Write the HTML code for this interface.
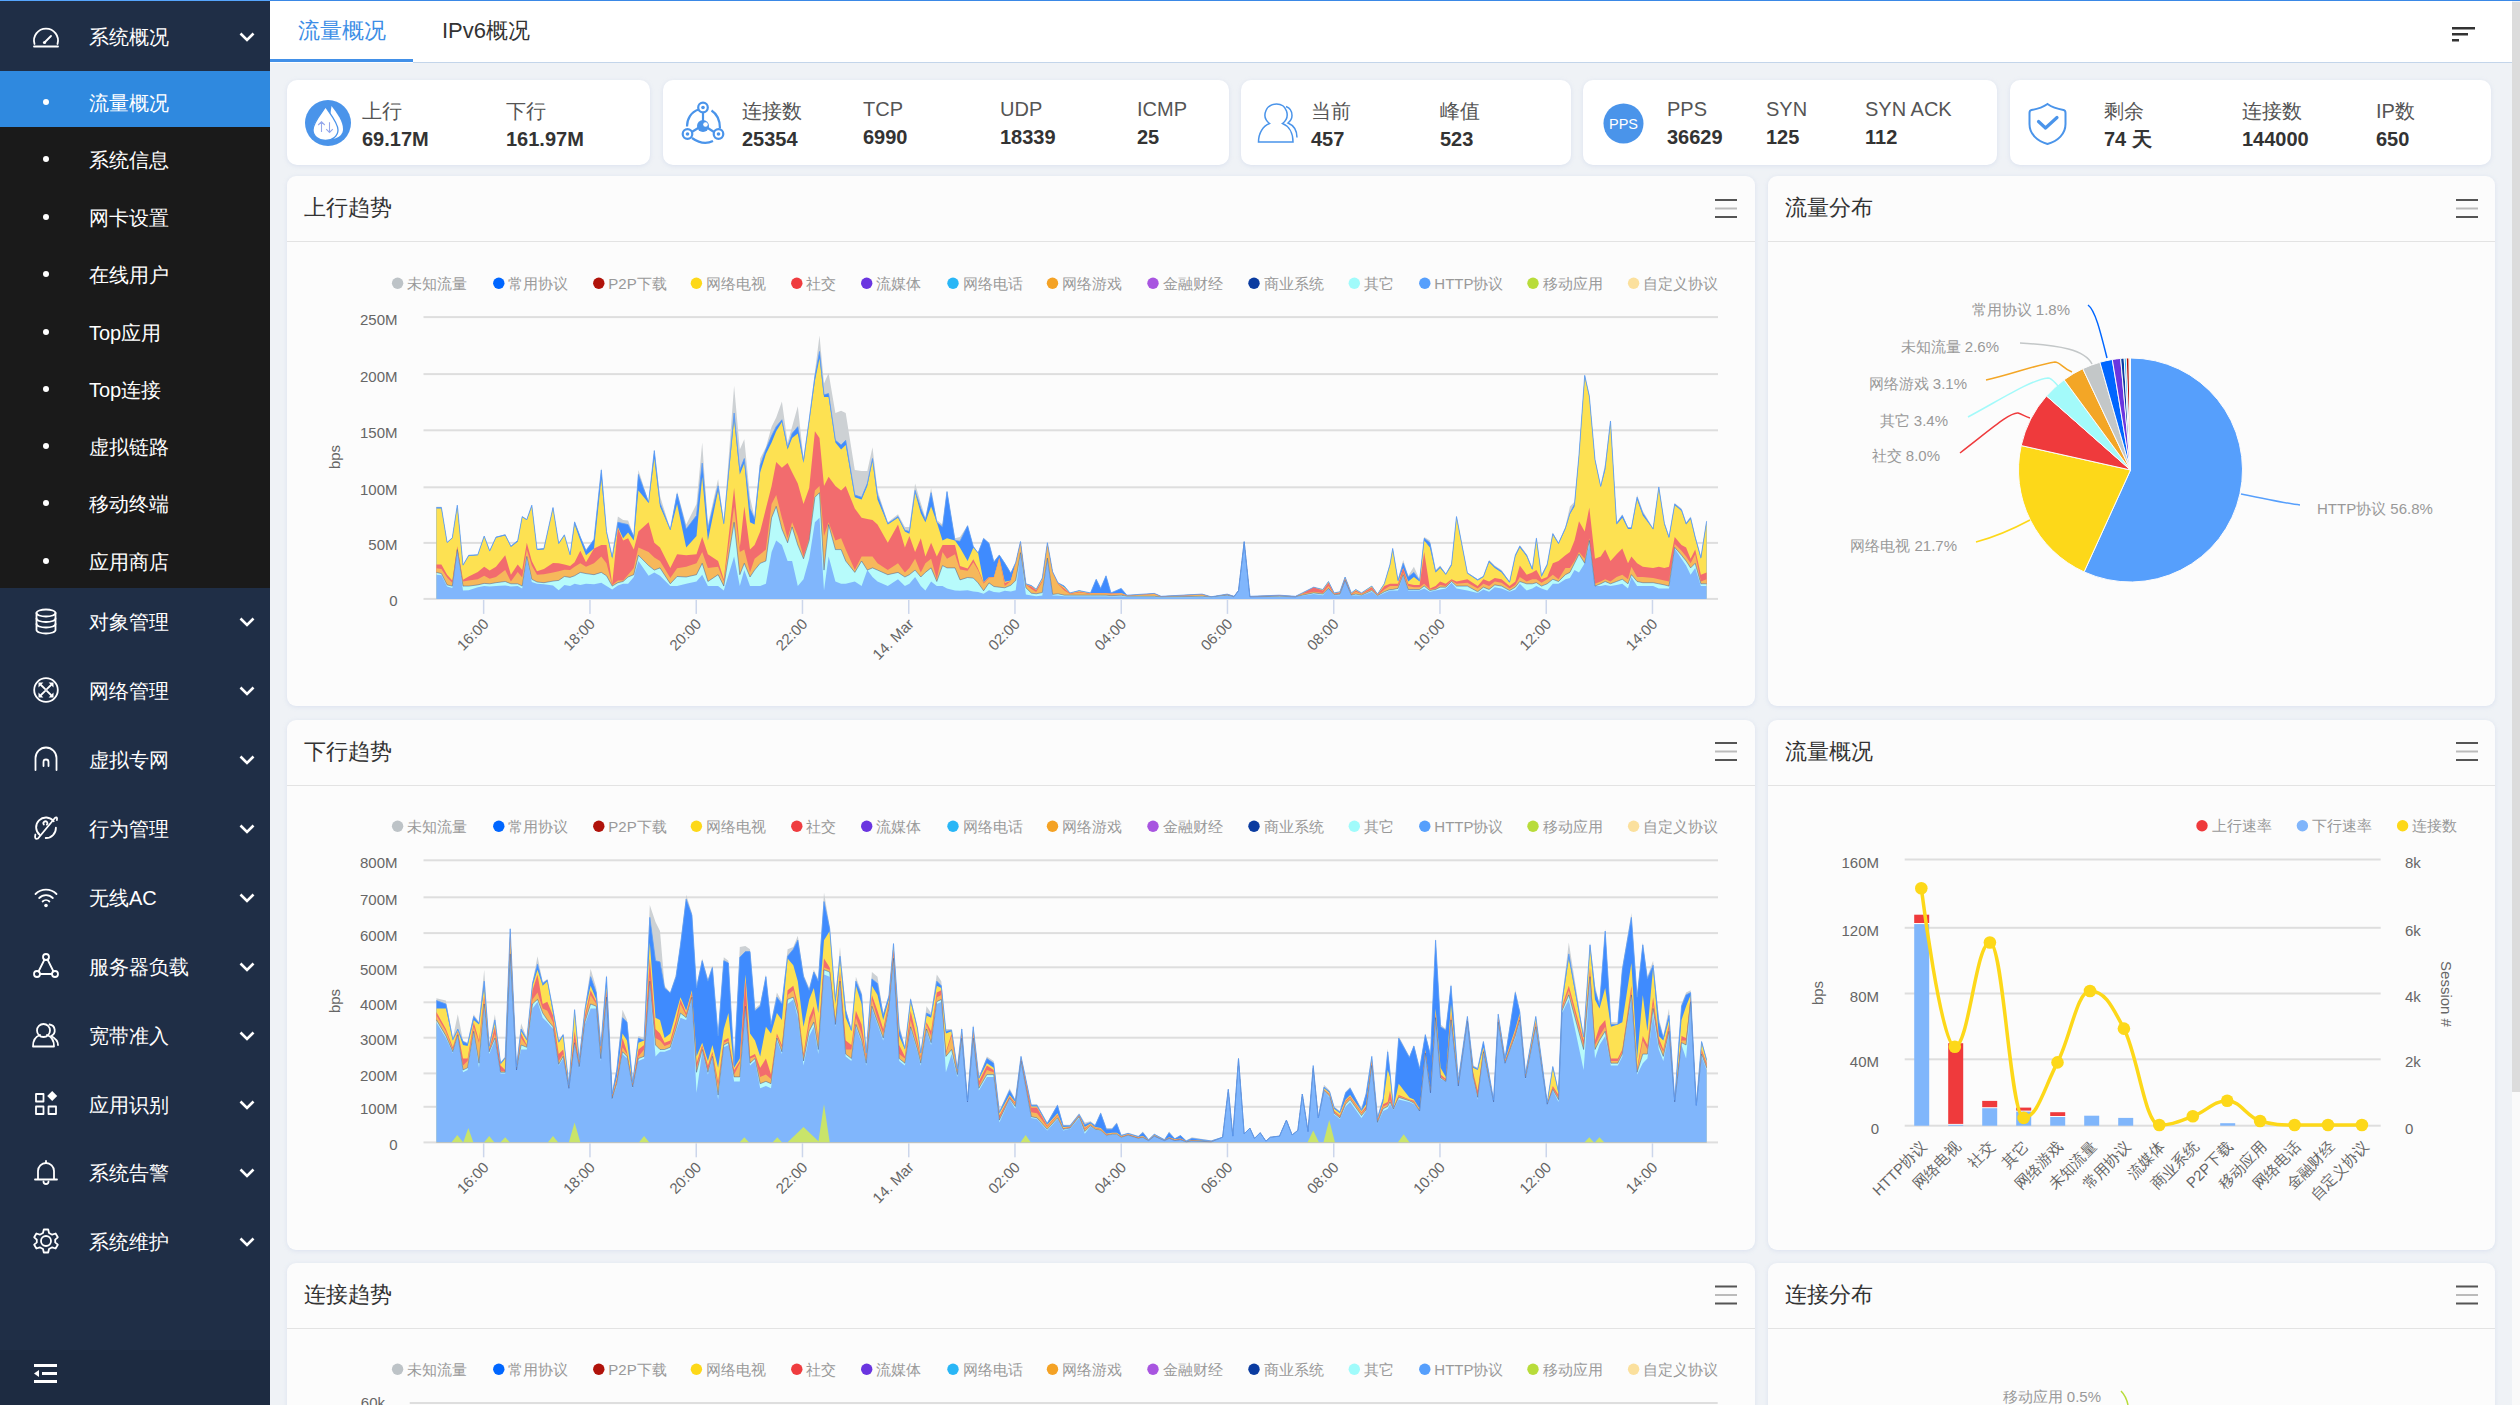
<!DOCTYPE html>
<html><head><meta charset="utf-8"><style>
*{margin:0;padding:0;box-sizing:border-box}
html,body{width:2520px;height:1405px;overflow:hidden;background:#eff2f6;font-family:'Liberation Sans', sans-serif}
.abs{position:absolute}
#sb{position:absolute;left:0;top:0;width:270px;height:1405px;background:#1f2e46;color:#fff}
.sb-item{position:absolute;left:0;width:270px}
#sb span,.st{position:absolute;left:89px;font-size:20px;line-height:20px;transform:translateY(-45%);white-space:nowrap;color:#fff}
.ic{position:absolute}
.chev{position:absolute;left:239px}
.dot{position:absolute;left:43px;width:6px;height:6px;border-radius:50%;background:#fff}
#tabs{position:absolute;left:270px;top:0;width:2242px;height:63px;background:#fff}
.tab{position:absolute;top:20px;font-size:22px;line-height:22px;white-space:nowrap}
.sc{position:absolute;top:80px;height:85px;background:#fff;border-radius:10px;box-shadow:0 1px 4px rgba(180,195,225,.35)}
.k{position:absolute;top:100px;font-size:20px;line-height:22px;color:#555;white-space:nowrap}
.kl{top:98px}
.kl+.v{top:126px}
.v{position:absolute;top:128px;font-size:20px;line-height:22px;font-weight:bold;color:#333;white-space:nowrap}
.cc{position:absolute;background:#fcfcfc;border-radius:9px;box-shadow:0 1px 4px rgba(180,195,225,.35)}
.ch{position:absolute;left:0;top:0;right:0;height:66px;border-bottom:1.5px solid #e3e3e3;font-size:22px;line-height:22px;color:#333;padding:21px 0 0 17px;white-space:nowrap}
svg text{font-family:'Liberation Sans', sans-serif}
.lg{font-size:15px;fill:#999}
.ax{font-size:15px;fill:#666}
.pl{font-size:15px;fill:#999}
</style></head><body>
<div style="position:absolute;left:270px;top:0;width:2250px;height:1px;background:#3a88e6;z-index:5"></div><div style="position:absolute;left:0;top:0;width:270px;height:1px;background:#55a5fd;z-index:5"></div>
<div id="tabs">
<div class="tab" style="left:28px;color:#3d8ee6">流量概况</div>
<div class="tab" style="left:172px;color:#333">IPv6概况</div>
<div style="position:absolute;left:0;top:59px;width:143px;height:3px;background:#4290e8"></div>
<div style="position:absolute;left:143px;top:62px;width:2099px;height:1px;background:#c3d5ea"></div>
<svg style="position:absolute;left:2182px;top:26px" width="24" height="17" viewBox="0 0 24 17"><rect x="0" y="1" width="23" height="2.5" fill="#333"/><rect x="0" y="7" width="16" height="2.5" fill="#333"/><rect x="0" y="13" width="7" height="2.5" fill="#333"/></svg>
</div>
<div style="position:absolute;left:2512px;top:2px;width:8px;height:1090px;background:#dcdcdc"></div>
<div style="position:absolute;left:2512px;top:1092px;width:8px;height:313px;background:#fafafa"></div>
<div class="sc" style="left:287px;width:363px"></div>
<div class="sc" style="left:663px;width:566px"></div>
<div class="sc" style="left:1241px;width:330px"></div>
<div class="sc" style="left:1583px;width:414px"></div>
<div class="sc" style="left:2010px;width:481px"></div>
<div class="k" style="left:362px">上行</div><div class="v" style="left:362px">69.17M</div>
<div class="k" style="left:506px">下行</div><div class="v" style="left:506px">161.97M</div>
<div class="k" style="left:742px">连接数</div><div class="v" style="left:742px">25354</div>
<div class="k kl" style="left:863px">TCP</div><div class="v" style="left:863px">6990</div>
<div class="k kl" style="left:1000px">UDP</div><div class="v" style="left:1000px">18339</div>
<div class="k kl" style="left:1137px">ICMP</div><div class="v" style="left:1137px">25</div>
<div class="k" style="left:1311px">当前</div><div class="v" style="left:1311px">457</div>
<div class="k" style="left:1440px">峰值</div><div class="v" style="left:1440px">523</div>
<div class="k kl" style="left:1667px">PPS</div><div class="v" style="left:1667px">36629</div>
<div class="k kl" style="left:1766px">SYN</div><div class="v" style="left:1766px">125</div>
<div class="k kl" style="left:1865px">SYN ACK</div><div class="v" style="left:1865px">112</div>
<div class="k" style="left:2104px">剩余</div><div class="v" style="left:2104px">74 天</div>
<div class="k" style="left:2242px">连接数</div><div class="v" style="left:2242px">144000</div>
<div class="k" style="left:2376px">IP数</div><div class="v" style="left:2376px">650</div>
<svg class="ic" style="left:305px;top:100px" width="46" height="46" viewBox="0 0 46 46"><circle cx="23" cy="23" r="23" fill="#4a94ea"/><path d="M26.5,6 C32,13 38,21.5 38,29 C38,33.5 35,37 30,38.5 L22,39 Z" fill="#fff"/><path d="M20.6,7 C15,15 8,23 8,30 C8,36 13.5,40.5 20.5,40.5 C27.5,40.5 33,36 33,30 C33,23 26,15 20.6,7 Z" fill="#fff" stroke="#4a94ea" stroke-width="1.3"/><path d="M16.5,32 V21.8 M13.2,25 L16.5,21.8 L19.8,25 M24.5,22.2 V32.5 M21.2,29.2 L24.5,32.5 L27.8,29.2" stroke="#95a8ec" stroke-width="1.1" fill="none"/></svg>
<svg class="ic" style="left:680px;top:100px" width="46" height="46" viewBox="0 0 46 46"><g stroke="#4a94ea" stroke-width="2.2" fill="none"><circle cx="23" cy="7.5" r="4.8"/><circle cx="7.5" cy="34" r="4.8"/><circle cx="38.5" cy="34" r="4.8"/><path d="M18.5,9.5 C11,12 7,19 7,26.5 M31.5,10.5 C37,14 40,20 40,28.5 M12,38 C19,43 27,44 33,41 M23,12.3 V21 M11.8,32 L19,27.5 M34,32 L27,27.5"/></g><circle cx="23" cy="26" r="6" fill="#4a94ea"/><circle cx="25.5" cy="24.5" r="2.3" fill="#fff"/><circle cx="23" cy="7.5" r="1.8" fill="#4a94ea"/><circle cx="7.5" cy="34" r="1.8" fill="#4a94ea"/><circle cx="38.5" cy="34" r="1.8" fill="#4a94ea"/></svg>
<svg class="ic" style="left:1257px;top:102px" width="44" height="44" viewBox="0 0 44 44"><g stroke="#4a94ea" stroke-width="1.5" fill="none"><path d="M1.5,40 C1.5,31 6,24 12.5,21.5 C8,18 7,13 9,8.5 C11,4 15,2 19.5,2 C24,2 28,4.5 29.5,9 C31,13.5 29.5,18.5 25.5,21.5 C32,24 36,31 36,40 Z"/><path d="M29,4.5 C33,6 35,9.5 35,13.5 C35,16.5 33.5,19 31,21 C37,23.5 40,29 40,35.5"/></g></svg>
<svg class="ic" style="left:1603px;top:103px" width="41" height="41" viewBox="0 0 41 41"><circle cx="20.5" cy="20.5" r="20" fill="#4a94ea"/><text x="20.5" y="26" text-anchor="middle" font-size="14.5" fill="#fff" font-family="Liberation Sans, sans-serif">PPS</text></svg>
<svg class="ic" style="left:2027px;top:102px" width="42" height="44" viewBox="0 0 42 44"><path d="M20.5,2 C17,4.5 13,6.5 4.5,8 C3,8.3 2.5,9.5 2.5,11 V22 C2.5,32 10,39 20.5,42 C31,39 38.5,32 38.5,22 V11 C38.5,9.5 38,8.3 36.5,8 C28,6.5 24,4.5 20.5,2 Z" stroke="#4a94ea" stroke-width="2" fill="none"/><path d="M11.5,19.5 L18.5,26 L30,15.5" stroke="#4a94ea" stroke-width="3.2" fill="none" stroke-linecap="round" stroke-linejoin="round"/></svg>
<div class="cc" style="left:287px;top:176px;width:1468px;height:530px"><div class="ch">上行趋势</div></div>
<div class="cc" style="left:1768px;top:176px;width:727px;height:530px"><div class="ch">流量分布</div></div>
<div class="cc" style="left:287px;top:720px;width:1468px;height:530px"><div class="ch">下行趋势</div></div>
<div class="cc" style="left:1768px;top:720px;width:727px;height:530px"><div class="ch">流量概况</div></div>
<div class="cc" style="left:287px;top:1263px;width:1468px;height:217px"><div class="ch">连接趋势</div></div>
<div class="cc" style="left:1768px;top:1263px;width:727px;height:217px"><div class="ch">连接分布</div></div>
<svg style="position:absolute;left:0;top:0" width="2520" height="1405" viewBox="0 0 2520 1405">
<circle cx="397.6" cy="283.3" r="5.7" fill="#bdc3c7"/>
<text x="407.1" y="288.8" class="lg">未知流量</text>
<circle cx="498.8" cy="283.3" r="5.7" fill="#0066ff"/>
<text x="508.3" y="288.8" class="lg">常用协议</text>
<circle cx="598.8" cy="283.3" r="5.7" fill="#b0120a"/>
<text x="608.3" y="288.8" class="lg">P2P下载</text>
<circle cx="696.4" cy="283.3" r="5.7" fill="#fdd819"/>
<text x="705.9" y="288.8" class="lg">网络电视</text>
<circle cx="796.8" cy="283.3" r="5.7" fill="#ef3c3f"/>
<text x="806.3" y="288.8" class="lg">社交</text>
<circle cx="866.7" cy="283.3" r="5.7" fill="#6a35e0"/>
<text x="876.2" y="288.8" class="lg">流媒体</text>
<circle cx="953.0" cy="283.3" r="5.7" fill="#29b6f6"/>
<text x="962.5" y="288.8" class="lg">网络电话</text>
<circle cx="1052.5" cy="283.3" r="5.7" fill="#f4a225"/>
<text x="1062.0" y="288.8" class="lg">网络游戏</text>
<circle cx="1153.0" cy="283.3" r="5.7" fill="#a855e0"/>
<text x="1162.5" y="288.8" class="lg">金融财经</text>
<circle cx="1254.0" cy="283.3" r="5.7" fill="#0a3ba0"/>
<text x="1263.5" y="288.8" class="lg">商业系统</text>
<circle cx="1354.3" cy="283.3" r="5.7" fill="#a0fbfb"/>
<text x="1363.8" y="288.8" class="lg">其它</text>
<circle cx="1424.8" cy="283.3" r="5.7" fill="#569ffc"/>
<text x="1434.3" y="288.8" class="lg">HTTP协议</text>
<circle cx="1533.0" cy="283.3" r="5.7" fill="#b8dc3a"/>
<text x="1542.5" y="288.8" class="lg">移动应用</text>
<circle cx="1633.6" cy="283.3" r="5.7" fill="#fbe09d"/>
<text x="1643.1" y="288.8" class="lg">自定义协议</text>
<rect x="423.5" y="316.1" width="1294.5" height="2" fill="#dedede"/>
<text x="397.5" y="324.6" class="ax" text-anchor="end">250M</text>
<rect x="423.5" y="373.1" width="1294.5" height="2" fill="#dedede"/>
<text x="397.5" y="381.6" class="ax" text-anchor="end">200M</text>
<rect x="423.5" y="429.3" width="1294.5" height="2" fill="#dedede"/>
<text x="397.5" y="437.8" class="ax" text-anchor="end">150M</text>
<rect x="423.5" y="486.3" width="1294.5" height="2" fill="#dedede"/>
<text x="397.5" y="494.8" class="ax" text-anchor="end">100M</text>
<rect x="423.5" y="541.9" width="1294.5" height="2" fill="#dedede"/>
<text x="397.5" y="550.4" class="ax" text-anchor="end">50M</text>
<rect x="423.5" y="597.9" width="1294.5" height="2" fill="#dedede"/>
<text x="397.5" y="606.4" class="ax" text-anchor="end">0</text>
<path d="M436.4,598.9 L436.4,506.8 L441.4,506.8 L447.1,542.4 L452.3,537.8 L457.3,505.2 L463.0,565.1 L468.7,555.3 L477.8,554.7 L484.2,536.0 L489.7,550.8 L496.0,537.1 L505.2,534.2 L510.9,546.2 L517.7,540.5 L522.2,516.6 L526.8,519.6 L531.8,505.2 L537.0,549.2 L543.9,548.5 L553.0,507.5 L558.7,543.3 L564.4,534.8 L570.1,554.7 L574.6,521.2 L580.3,536.4 L586.0,549.6 L594.0,538.7 L601.3,467.7 L606.5,531.4 L612.2,556.5 L617.9,516.6 L623.1,520.0 L628.1,520.5 L633.8,536.0 L638.4,469.9 L648.6,501.8 L654.3,449.4 L660.0,496.1 L670.3,529.1 L677.1,491.6 L686.2,524.6 L696.5,504.1 L702.2,442.6 L707.9,524.6 L718.1,479.0 L723.8,522.3 L734.1,385.7 L739.8,449.4 L744.3,439.2 L750.0,497.3 L754.6,517.8 L760.2,458.5 L765.9,447.2 L771.6,426.7 L776.2,417.5 L781.9,401.6 L787.6,442.6 L792.1,426.7 L797.8,406.2 L803.5,458.5 L809.2,417.5 L814.9,372.0 L819.5,335.6 L824.0,383.4 L828.6,373.1 L835.4,413.0 L841.1,410.7 L845.7,413.0 L854.8,469.9 L861.6,471.1 L867.3,471.1 L872.5,447.2 L877.5,490.4 L887.8,522.3 L898.0,514.3 L904.9,526.9 L909.4,526.9 L915.1,483.6 L920.8,503.0 L925.4,517.8 L931.1,488.1 L936.8,520.0 L942.5,524.6 L947.0,490.4 L955.0,538.3 L960.0,536.9 L967.6,525.4 L973.3,546.0 L978.1,552.7 L983.6,538.1 L989.0,543.0 L993.9,561.7 L999.3,554.5 L1004.8,563.0 L1010.8,572.6 L1015.7,562.3 L1020.5,541.2 L1025.9,583.5 L1031.4,585.3 L1036.2,589.0 L1042.3,577.5 L1047.4,542.4 L1052.6,571.4 L1058.0,582.3 L1064.3,586.1 L1070.0,592.9 L1079.1,590.6 L1090.5,592.9 L1096.2,579.3 L1100.7,588.4 L1106.0,575.8 L1111.0,592.9 L1121.2,588.4 L1126.9,595.2 L1154.3,593.4 L1161.1,596.3 L1202.1,594.1 L1211.2,596.8 L1227.2,594.1 L1234.0,596.3 L1238.5,590.6 L1244.2,541.7 L1249.9,596.3 L1279.5,595.2 L1295.5,596.3 L1302.3,592.9 L1313.7,587.2 L1322.8,589.5 L1328.5,581.5 L1334.2,592.9 L1339.9,591.8 L1345.1,577.0 L1351.3,592.9 L1355.8,589.5 L1361.5,592.9 L1371.8,586.1 L1377.5,594.1 L1384.3,583.8 L1390.0,563.3 L1392.7,547.4 L1398.0,579.3 L1403.2,559.9 L1408.2,575.8 L1413.9,566.7 L1419.6,579.3 L1424.2,537.1 L1429.9,540.5 L1435.6,570.1 L1440.1,565.6 L1445.8,573.6 L1451.5,563.3 L1456.5,515.5 L1467.4,572.4 L1477.7,579.3 L1483.4,575.8 L1489.1,559.9 L1494.8,565.6 L1501.6,570.1 L1509.6,581.5 L1515.3,554.2 L1519.8,545.1 L1526.7,554.2 L1532.3,567.9 L1536.4,537.1 L1541.5,574.7 L1547.2,563.3 L1552.8,532.6 L1558.5,542.8 L1565.4,526.9 L1569.9,506.4 L1574.5,501.8 L1579.0,454.0 L1584.7,374.3 L1589.3,394.8 L1595.0,458.5 L1600.7,485.9 L1605.2,463.1 L1610.5,419.8 L1616.6,522.3 L1622.3,514.3 L1628.0,526.9 L1631.4,526.9 L1637.1,495.0 L1642.8,510.9 L1653.1,528.0 L1658.8,485.9 L1664.4,522.3 L1669.0,536.0 L1674.7,503.0 L1681.5,508.6 L1686.1,522.3 L1690.6,516.6 L1695.2,536.0 L1700.9,556.5 L1706.6,520.0 L1706.6,598.9 Z" fill="#cdd1d4"/>
<path d="M436.4,598.9 L436.4,507.5 L441.4,507.5 L447.1,542.4 L452.3,537.8 L457.3,505.2 L463.0,565.1 L468.7,555.3 L477.8,554.7 L484.2,536.0 L489.7,550.8 L496.0,537.1 L505.2,534.8 L510.9,546.2 L517.7,540.5 L522.2,516.6 L526.8,519.6 L531.8,505.2 L537.0,549.2 L543.9,548.5 L553.0,507.5 L558.7,543.3 L564.4,534.8 L570.1,554.7 L574.6,521.9 L580.3,537.1 L586.0,550.8 L594.0,539.4 L601.3,469.9 L606.5,531.4 L612.2,556.9 L617.9,522.3 L623.1,523.5 L628.1,524.6 L633.8,536.4 L638.4,474.5 L648.6,502.3 L654.3,450.6 L660.0,503.0 L670.3,529.6 L677.1,493.8 L686.2,529.1 L696.5,515.5 L702.2,463.1 L707.9,529.1 L718.1,485.9 L723.8,523.5 L734.1,413.0 L739.8,469.9 L744.3,458.5 L750.0,508.6 L754.6,518.9 L760.2,465.4 L765.9,449.4 L771.6,435.8 L776.2,426.7 L781.9,419.8 L787.6,447.2 L792.1,433.5 L797.8,426.7 L803.5,460.8 L809.2,419.8 L814.9,376.5 L819.5,351.5 L824.0,394.8 L828.6,393.6 L835.4,440.3 L841.1,444.9 L845.7,440.3 L854.8,495.0 L861.6,497.3 L867.3,483.6 L872.5,458.5 L877.5,495.0 L887.8,523.5 L898.0,516.6 L904.9,530.3 L909.4,531.4 L915.1,490.4 L920.8,508.6 L925.4,520.0 L931.1,492.7 L936.8,522.3 L942.5,526.9 L947.0,491.6 L955.0,540.5 L960.0,541.2 L967.6,525.7 L973.3,546.6 L978.1,553.0 L983.6,538.5 L989.0,543.3 L993.9,562.0 L999.3,555.1 L1004.8,563.3 L1010.8,573.2 L1015.7,562.6 L1020.5,541.5 L1025.9,583.8 L1031.4,585.6 L1036.2,589.3 L1042.3,578.1 L1047.4,542.7 L1052.6,571.7 L1058.0,582.9 L1064.3,586.1 L1070.0,592.9 L1079.1,590.6 L1090.5,592.9 L1096.2,579.3 L1100.7,588.4 L1106.0,575.8 L1111.0,592.9 L1121.2,588.4 L1126.9,595.2 L1154.3,593.4 L1161.1,596.3 L1202.1,594.1 L1211.2,596.8 L1227.2,594.1 L1234.0,596.3 L1238.5,590.6 L1244.2,541.7 L1249.9,596.3 L1279.5,595.2 L1295.5,596.3 L1302.3,592.9 L1313.7,587.2 L1322.8,589.5 L1328.5,581.5 L1334.2,592.9 L1339.9,591.8 L1345.1,577.0 L1351.3,592.9 L1355.8,589.5 L1361.5,592.9 L1371.8,586.1 L1377.5,594.1 L1384.3,583.8 L1390.0,564.4 L1392.7,548.5 L1398.0,580.4 L1403.2,563.3 L1408.2,577.0 L1413.9,572.4 L1419.6,580.4 L1424.2,538.3 L1429.9,542.8 L1435.6,571.3 L1440.1,566.7 L1445.8,574.2 L1451.5,564.4 L1456.5,516.6 L1467.4,572.9 L1477.7,579.7 L1483.4,576.5 L1489.1,561.0 L1494.8,566.7 L1501.6,571.3 L1509.6,582.0 L1515.3,555.3 L1519.8,546.2 L1526.7,555.3 L1532.3,569.0 L1536.4,538.3 L1541.5,575.8 L1547.2,564.4 L1552.8,533.7 L1558.5,543.3 L1565.4,528.0 L1569.9,513.2 L1574.5,504.1 L1579.0,455.1 L1584.7,375.4 L1589.3,395.9 L1595.0,459.7 L1600.7,486.3 L1605.2,467.7 L1610.5,421.0 L1616.6,523.5 L1622.3,515.5 L1628.0,528.0 L1631.4,528.0 L1637.1,497.3 L1642.8,513.2 L1653.1,529.1 L1658.8,487.0 L1664.4,523.5 L1669.0,537.1 L1674.7,504.1 L1681.5,509.8 L1686.1,523.5 L1690.6,517.8 L1695.2,537.1 L1700.9,557.6 L1706.6,521.2 L1706.6,598.9 Z" fill="#3f8bfe"/>
<path d="M436.4,598.9 L436.4,508.6 L441.4,508.6 L447.1,542.8 L452.3,538.3 L457.3,506.4 L463.0,565.6 L468.7,556.0 L477.8,555.3 L484.2,536.4 L489.7,551.5 L496.0,537.8 L505.2,535.5 L510.9,546.9 L517.7,541.7 L522.2,517.3 L526.8,520.0 L531.8,506.4 L537.0,550.1 L543.9,549.6 L553.0,508.2 L558.7,544.0 L564.4,535.5 L570.1,555.3 L574.6,524.6 L580.3,540.5 L586.0,555.3 L594.0,548.5 L601.3,479.0 L606.5,532.6 L612.2,558.8 L617.9,526.9 L623.1,538.3 L628.1,532.6 L633.8,540.5 L638.4,490.4 L648.6,503.0 L654.3,458.5 L660.0,506.4 L670.3,530.3 L677.1,504.1 L686.2,547.4 L696.5,536.0 L702.2,476.8 L707.9,540.5 L718.1,490.4 L723.8,524.6 L734.1,419.8 L739.8,474.5 L744.3,463.1 L750.0,522.3 L754.6,524.6 L760.2,472.2 L765.9,454.0 L771.6,442.6 L776.2,431.2 L781.9,422.1 L787.6,449.4 L792.1,438.0 L797.8,433.5 L803.5,463.1 L809.2,422.1 L814.9,381.1 L819.5,358.3 L824.0,397.0 L828.6,397.0 L835.4,442.6 L841.1,449.4 L845.7,444.9 L854.8,497.3 L861.6,499.5 L867.3,485.9 L872.5,460.8 L877.5,499.5 L887.8,524.6 L898.0,517.8 L904.9,531.4 L909.4,533.7 L915.1,492.7 L920.8,513.2 L925.4,522.3 L931.1,506.4 L936.8,522.3 L942.5,540.5 L947.0,538.3 L955.0,540.5 L960.0,547.8 L967.6,561.1 L973.3,547.8 L978.1,553.0 L983.6,582.3 L989.0,576.9 L993.9,576.9 L999.3,557.5 L1004.8,581.7 L1010.8,580.5 L1015.7,563.0 L1020.5,541.8 L1025.9,584.1 L1031.4,585.9 L1036.2,589.6 L1042.3,578.4 L1047.4,543.0 L1052.6,572.0 L1058.0,583.2 L1064.3,587.2 L1070.0,592.9 L1079.1,591.1 L1090.5,592.9 L1096.2,592.9 L1100.7,592.9 L1106.0,592.9 L1111.0,593.4 L1121.2,592.9 L1126.9,595.2 L1154.3,593.4 L1161.1,596.3 L1202.1,594.1 L1211.2,596.8 L1227.2,594.1 L1234.0,596.3 L1238.5,590.6 L1244.2,541.7 L1249.9,596.3 L1279.5,595.2 L1295.5,596.3 L1302.3,592.9 L1313.7,587.2 L1322.8,589.5 L1328.5,581.5 L1334.2,592.9 L1339.9,591.8 L1345.1,577.0 L1351.3,592.9 L1355.8,589.5 L1361.5,592.9 L1371.8,586.1 L1377.5,594.1 L1384.3,583.8 L1390.0,565.6 L1392.7,549.6 L1398.0,581.5 L1403.2,567.9 L1408.2,581.5 L1413.9,577.0 L1419.6,581.5 L1424.2,540.5 L1429.9,547.4 L1435.6,572.4 L1440.1,567.9 L1445.8,574.7 L1451.5,565.6 L1456.5,517.8 L1467.4,573.6 L1477.7,580.4 L1483.4,577.0 L1489.1,562.2 L1494.8,567.9 L1501.6,572.4 L1509.6,582.7 L1515.3,556.5 L1519.8,547.4 L1526.7,556.5 L1532.3,570.1 L1536.4,539.4 L1541.5,577.0 L1547.2,565.6 L1552.8,534.8 L1558.5,544.0 L1565.4,529.1 L1569.9,514.3 L1574.5,506.4 L1579.0,456.3 L1584.7,376.5 L1589.3,397.0 L1595.0,460.8 L1600.7,487.0 L1605.2,469.9 L1610.5,422.1 L1616.6,524.6 L1622.3,517.8 L1628.0,529.1 L1631.4,529.1 L1637.1,499.5 L1642.8,515.5 L1653.1,529.1 L1658.8,488.1 L1664.4,524.6 L1669.0,538.3 L1674.7,505.2 L1681.5,510.9 L1686.1,524.6 L1690.6,518.9 L1695.2,538.3 L1700.9,558.8 L1706.6,522.3 L1706.6,598.9 Z" fill="#fde152"/>
<path d="M436.4,598.9 L436.4,564.4 L441.4,564.4 L447.1,574.7 L452.3,580.4 L457.3,546.2 L463.0,579.7 L468.7,576.5 L477.8,572.0 L484.2,566.7 L489.7,570.6 L496.0,566.7 L505.2,555.3 L510.9,574.7 L517.7,564.4 L522.2,570.1 L526.8,542.8 L531.8,561.0 L537.0,571.3 L543.9,569.0 L553.0,562.9 L558.7,563.3 L564.4,564.4 L570.1,566.0 L574.6,562.2 L580.3,550.8 L586.0,562.2 L594.0,548.5 L601.3,545.1 L606.5,545.1 L612.2,583.8 L617.9,528.0 L623.1,540.5 L628.1,538.3 L633.8,549.6 L638.4,531.4 L648.6,522.3 L654.3,542.8 L660.0,547.4 L670.3,567.9 L677.1,554.2 L686.2,555.3 L696.5,554.2 L702.2,537.1 L707.9,554.2 L718.1,561.0 L723.8,579.3 L734.1,488.1 L739.8,547.4 L744.3,506.4 L750.0,549.6 L754.6,545.1 L760.2,531.4 L765.9,508.6 L771.6,485.9 L776.2,462.0 L781.9,467.7 L787.6,463.1 L792.1,472.2 L797.8,483.6 L803.5,504.1 L809.2,488.1 L814.9,431.2 L819.5,438.0 L824.0,485.9 L828.6,476.8 L835.4,485.9 L841.1,490.4 L845.7,485.9 L854.8,508.6 L861.6,517.8 L867.3,518.9 L872.5,520.0 L877.5,524.6 L887.8,542.8 L898.0,524.6 L904.9,547.4 L909.4,536.0 L915.1,551.9 L920.8,538.3 L925.4,556.5 L931.1,542.8 L936.8,556.5 L942.5,545.1 L947.0,545.1 L955.0,545.1 L960.0,566.0 L967.6,568.4 L973.3,559.3 L978.1,568.4 L983.6,582.6 L989.0,577.2 L993.9,577.5 L999.3,557.8 L1004.8,582.9 L1010.8,580.8 L1015.7,563.3 L1020.5,542.1 L1025.9,584.4 L1031.4,586.5 L1036.2,590.2 L1042.3,580.5 L1047.4,543.3 L1052.6,572.3 L1058.0,583.5 L1064.3,588.4 L1070.0,593.4 L1079.1,591.8 L1090.5,593.4 L1096.2,593.4 L1100.7,593.4 L1106.0,593.4 L1111.0,593.6 L1121.2,593.4 L1126.9,595.4 L1154.3,593.6 L1161.1,596.3 L1202.1,594.3 L1211.2,596.8 L1227.2,594.3 L1234.0,596.3 L1238.5,590.6 L1244.2,541.7 L1249.9,596.3 L1279.5,595.2 L1295.5,596.3 L1302.3,593.4 L1313.7,587.2 L1322.8,590.6 L1328.5,582.7 L1334.2,593.4 L1339.9,592.5 L1345.1,578.1 L1351.3,594.1 L1355.8,590.6 L1361.5,593.4 L1371.8,587.2 L1377.5,594.7 L1384.3,586.1 L1390.0,583.8 L1392.7,583.8 L1398.0,583.8 L1403.2,567.9 L1408.2,583.8 L1413.9,584.9 L1419.6,584.9 L1424.2,551.9 L1429.9,588.4 L1435.6,586.1 L1440.1,581.5 L1445.8,583.8 L1451.5,579.3 L1456.5,581.5 L1467.4,579.3 L1477.7,586.1 L1483.4,579.3 L1489.1,581.5 L1494.8,578.1 L1501.6,579.3 L1509.6,586.1 L1515.3,581.5 L1519.8,565.6 L1526.7,574.7 L1532.3,572.4 L1536.4,570.1 L1541.5,579.3 L1547.2,577.0 L1552.8,563.3 L1558.5,561.0 L1565.4,555.3 L1569.9,551.9 L1574.5,540.5 L1579.0,521.2 L1584.7,531.4 L1589.3,507.5 L1595.0,558.8 L1600.7,556.5 L1605.2,549.6 L1610.5,561.0 L1616.6,554.2 L1622.3,548.5 L1628.0,563.3 L1631.4,556.5 L1637.1,563.3 L1642.8,566.7 L1653.1,567.9 L1658.8,566.7 L1664.4,567.9 L1669.0,566.7 L1674.7,537.1 L1681.5,545.1 L1686.1,547.4 L1690.6,558.8 L1695.2,549.6 L1700.9,574.7 L1706.6,572.4 L1706.6,598.9 Z" fill="#f26c6e"/>
<path d="M436.4,598.9 L436.4,568.3 L441.4,569.0 L447.1,577.4 L452.3,582.7 L457.3,548.5 L463.0,581.5 L468.7,580.4 L477.8,579.3 L484.2,575.8 L489.7,578.8 L496.0,577.0 L505.2,570.1 L510.9,581.5 L517.7,572.0 L522.2,577.4 L526.8,549.6 L531.8,565.6 L537.0,574.7 L543.9,574.2 L553.0,572.4 L558.7,571.3 L564.4,569.7 L570.1,570.1 L574.6,566.7 L580.3,563.3 L586.0,566.7 L594.0,563.3 L601.3,556.5 L606.5,563.3 L612.2,584.9 L617.9,580.4 L623.1,580.4 L628.1,574.7 L633.8,567.9 L638.4,547.4 L648.6,551.9 L654.3,557.6 L660.0,561.0 L670.3,578.1 L677.1,568.3 L686.2,566.7 L696.5,563.3 L702.2,551.9 L707.9,567.9 L718.1,566.7 L723.8,581.5 L734.1,506.4 L739.8,551.9 L744.3,549.6 L750.0,572.4 L754.6,558.8 L760.2,554.2 L765.9,549.6 L771.6,504.1 L776.2,495.0 L781.9,517.8 L787.6,538.3 L792.1,522.3 L797.8,536.0 L803.5,556.5 L809.2,538.3 L814.9,490.4 L819.5,485.9 L824.0,536.0 L828.6,522.3 L835.4,540.5 L841.1,538.3 L845.7,549.6 L854.8,570.1 L861.6,556.5 L867.3,556.5 L872.5,556.5 L877.5,563.3 L887.8,570.1 L898.0,563.3 L904.9,572.4 L909.4,567.9 L915.1,558.8 L920.8,572.4 L925.4,563.3 L931.1,558.8 L936.8,579.3 L942.5,551.9 L947.0,558.8 L955.0,554.2 L960.0,569.6 L967.6,570.8 L973.3,562.3 L978.1,570.2 L983.6,583.5 L989.0,578.1 L993.9,577.8 L999.3,558.7 L1004.8,585.9 L1010.8,581.1 L1015.7,563.6 L1020.5,542.4 L1025.9,584.7 L1031.4,589.0 L1036.2,592.0 L1042.3,581.7 L1047.4,543.6 L1052.6,572.6 L1058.0,584.1 L1064.3,590.6 L1070.0,594.1 L1079.1,592.5 L1090.5,594.1 L1096.2,594.1 L1100.7,594.1 L1106.0,594.1 L1111.0,594.3 L1121.2,594.1 L1126.9,595.7 L1154.3,594.1 L1161.1,596.6 L1202.1,594.7 L1211.2,596.8 L1227.2,594.5 L1234.0,596.6 L1238.5,590.6 L1244.2,541.7 L1249.9,596.6 L1279.5,595.7 L1295.5,596.6 L1302.3,594.1 L1313.7,591.8 L1322.8,592.9 L1328.5,586.1 L1334.2,594.1 L1339.9,593.4 L1345.1,579.3 L1351.3,594.7 L1355.8,591.8 L1361.5,594.1 L1371.8,589.5 L1377.5,595.2 L1384.3,589.5 L1390.0,586.1 L1392.7,586.1 L1398.0,586.1 L1403.2,572.4 L1408.2,586.1 L1413.9,587.2 L1419.6,587.2 L1424.2,583.8 L1429.9,589.5 L1435.6,588.4 L1440.1,584.9 L1445.8,586.1 L1451.5,580.4 L1456.5,583.8 L1467.4,582.7 L1477.7,588.4 L1483.4,583.8 L1489.1,586.1 L1494.8,581.5 L1501.6,582.7 L1509.6,588.4 L1515.3,584.9 L1519.8,577.0 L1526.7,581.5 L1532.3,579.3 L1536.4,579.3 L1541.5,582.7 L1547.2,579.3 L1552.8,574.7 L1558.5,579.3 L1565.4,567.9 L1569.9,567.9 L1574.5,561.0 L1579.0,551.9 L1584.7,558.8 L1589.3,538.3 L1595.0,583.8 L1600.7,581.5 L1605.2,579.3 L1610.5,581.5 L1616.6,577.0 L1622.3,574.7 L1628.0,579.3 L1631.4,566.7 L1637.1,577.0 L1642.8,577.0 L1653.1,578.1 L1658.8,579.3 L1664.4,580.4 L1669.0,581.5 L1674.7,544.0 L1681.5,550.8 L1686.1,556.5 L1690.6,563.3 L1695.2,554.2 L1700.9,581.5 L1706.6,579.3 L1706.6,598.9 Z" fill="#f6b85b"/>
<path d="M436.4,598.9 L436.4,572.4 L441.4,573.6 L447.1,584.9 L452.3,586.1 L457.3,549.6 L463.0,586.1 L468.7,586.1 L477.8,584.9 L484.2,583.4 L489.7,583.8 L496.0,582.7 L505.2,581.5 L510.9,583.8 L517.7,583.8 L522.2,586.1 L526.8,556.5 L531.8,579.3 L537.0,582.0 L543.9,582.7 L553.0,581.1 L558.7,580.4 L564.4,576.5 L570.1,577.4 L574.6,575.8 L580.3,572.4 L586.0,573.6 L594.0,574.7 L601.3,572.4 L606.5,575.8 L612.2,586.1 L617.9,582.7 L623.1,581.5 L628.1,577.0 L633.8,574.7 L638.4,555.3 L648.6,565.6 L654.3,570.1 L660.0,567.9 L670.3,583.8 L677.1,576.5 L686.2,577.0 L696.5,574.7 L702.2,563.3 L707.9,581.5 L718.1,574.7 L723.8,586.1 L734.1,522.3 L739.8,574.7 L744.3,563.3 L750.0,577.0 L754.6,570.1 L760.2,563.3 L765.9,561.0 L771.6,517.8 L776.2,506.4 L781.9,529.1 L787.6,542.8 L792.1,526.9 L797.8,545.1 L803.5,558.8 L809.2,540.5 L814.9,497.3 L819.5,492.7 L824.0,570.1 L828.6,524.6 L835.4,549.6 L841.1,549.6 L845.7,561.0 L854.8,572.4 L861.6,561.0 L867.3,570.1 L872.5,567.9 L877.5,570.1 L887.8,574.7 L898.0,572.4 L904.9,577.0 L909.4,574.7 L915.1,570.1 L920.8,577.0 L925.4,572.4 L931.1,567.9 L936.8,581.5 L942.5,565.6 L947.0,567.9 L955.0,567.9 L960.0,579.9 L967.6,577.5 L973.3,578.1 L978.1,582.9 L983.6,590.8 L989.0,582.9 L993.9,586.5 L999.3,587.2 L1004.8,587.8 L1010.8,585.3 L1015.7,580.5 L1020.5,552.7 L1025.9,587.8 L1031.4,593.2 L1036.2,593.8 L1042.3,592.6 L1047.4,558.1 L1052.6,594.4 L1058.0,593.8 L1064.3,595.2 L1070.0,595.2 L1079.1,595.2 L1090.5,595.2 L1096.2,595.2 L1100.7,595.2 L1106.0,595.2 L1111.0,595.7 L1121.2,595.2 L1126.9,596.3 L1154.3,596.3 L1161.1,597.0 L1202.1,596.3 L1211.2,597.0 L1227.2,595.2 L1234.0,596.8 L1238.5,590.6 L1244.2,541.7 L1249.9,596.8 L1279.5,596.3 L1295.5,596.8 L1302.3,595.2 L1313.7,592.9 L1322.8,594.1 L1328.5,588.4 L1334.2,594.7 L1339.9,594.3 L1345.1,580.4 L1351.3,595.2 L1355.8,594.1 L1361.5,595.2 L1371.8,590.6 L1377.5,595.7 L1384.3,591.8 L1390.0,589.5 L1392.7,589.5 L1398.0,588.4 L1403.2,574.7 L1408.2,589.5 L1413.9,589.5 L1419.6,589.5 L1424.2,586.1 L1429.9,590.6 L1435.6,589.5 L1440.1,587.2 L1445.8,587.2 L1451.5,581.5 L1456.5,586.1 L1467.4,586.1 L1477.7,591.8 L1483.4,587.2 L1489.1,589.5 L1494.8,584.9 L1501.6,586.1 L1509.6,590.6 L1515.3,587.2 L1519.8,581.5 L1526.7,583.8 L1532.3,583.8 L1536.4,582.7 L1541.5,586.1 L1547.2,583.8 L1552.8,579.3 L1558.5,581.5 L1565.4,574.7 L1569.9,572.4 L1574.5,563.3 L1579.0,554.2 L1584.7,563.3 L1589.3,540.5 L1595.0,586.1 L1600.7,583.8 L1605.2,581.5 L1610.5,583.8 L1616.6,581.5 L1622.3,579.3 L1628.0,583.8 L1631.4,574.7 L1637.1,581.5 L1642.8,582.7 L1653.1,582.7 L1658.8,583.8 L1664.4,584.9 L1669.0,586.1 L1674.7,547.4 L1681.5,555.3 L1686.1,561.0 L1690.6,567.9 L1695.2,563.3 L1700.9,583.8 L1706.6,583.8 L1706.6,598.9 Z" fill="#b7fbfb"/>
<path d="M436.4,598.9 L436.4,574.7 L441.4,575.2 L447.1,586.5 L452.3,587.9 L457.3,550.8 L463.0,590.6 L468.7,590.2 L477.8,587.2 L484.2,586.1 L489.7,586.5 L496.0,586.1 L505.2,585.6 L510.9,586.5 L517.7,586.1 L522.2,588.4 L526.8,558.8 L531.8,582.0 L537.0,583.8 L543.9,584.3 L553.0,585.6 L558.7,590.2 L564.4,584.9 L570.1,586.1 L574.6,583.8 L580.3,584.9 L586.0,583.8 L594.0,584.3 L601.3,582.7 L606.5,586.1 L612.2,589.5 L617.9,585.6 L623.1,583.8 L628.1,583.8 L633.8,577.0 L638.4,561.0 L648.6,575.8 L654.3,572.4 L660.0,575.8 L670.3,586.1 L677.1,586.1 L686.2,583.8 L696.5,581.5 L702.2,574.7 L707.9,586.1 L718.1,586.1 L723.8,590.6 L734.1,556.5 L739.8,586.1 L744.3,570.1 L750.0,586.1 L754.6,586.1 L760.2,586.1 L765.9,583.8 L771.6,551.9 L776.2,540.5 L781.9,545.1 L787.6,561.0 L792.1,561.0 L797.8,586.1 L803.5,579.3 L809.2,558.8 L814.9,522.3 L819.5,517.8 L824.0,590.6 L828.6,556.5 L835.4,581.5 L841.1,583.8 L845.7,583.8 L854.8,581.5 L861.6,586.1 L867.3,570.1 L872.5,577.0 L877.5,581.5 L887.8,586.1 L898.0,579.3 L904.9,586.1 L909.4,583.8 L915.1,577.0 L920.8,586.1 L925.4,590.6 L931.1,581.5 L936.8,586.1 L942.5,586.1 L947.0,588.4 L955.0,590.6 L960.0,590.8 L967.6,590.2 L973.3,591.4 L978.1,592.0 L983.6,593.8 L989.0,590.2 L993.9,592.0 L999.3,592.6 L1004.8,590.8 L1010.8,591.4 L1015.7,590.2 L1020.5,553.9 L1025.9,594.4 L1031.4,595.6 L1036.2,596.2 L1042.3,595.6 L1047.4,558.7 L1052.6,595.6 L1058.0,595.6 L1064.3,596.3 L1070.0,596.3 L1079.1,596.3 L1090.5,596.3 L1096.2,596.3 L1100.7,596.3 L1106.0,596.3 L1111.0,596.6 L1121.2,596.3 L1126.9,597.0 L1154.3,597.0 L1161.1,597.5 L1202.1,597.0 L1211.2,597.5 L1227.2,595.7 L1234.0,597.0 L1238.5,590.6 L1244.2,541.7 L1249.9,597.0 L1279.5,597.0 L1295.5,597.0 L1302.3,595.7 L1313.7,594.1 L1322.8,595.2 L1328.5,588.4 L1334.2,595.2 L1339.9,595.2 L1345.1,580.4 L1351.3,595.7 L1355.8,595.2 L1361.5,595.7 L1371.8,591.8 L1377.5,596.3 L1384.3,592.9 L1390.0,590.6 L1392.7,590.6 L1398.0,590.6 L1403.2,575.8 L1408.2,590.6 L1413.9,590.6 L1419.6,590.6 L1424.2,588.4 L1429.9,591.8 L1435.6,590.6 L1440.1,589.5 L1445.8,588.4 L1451.5,582.7 L1456.5,588.4 L1467.4,590.6 L1477.7,592.9 L1483.4,589.5 L1489.1,591.8 L1494.8,587.2 L1501.6,588.4 L1509.6,591.8 L1515.3,589.5 L1519.8,583.8 L1526.7,590.6 L1532.3,588.4 L1536.4,586.1 L1541.5,588.4 L1547.2,590.6 L1552.8,583.8 L1558.5,583.8 L1565.4,579.3 L1569.9,578.1 L1574.5,570.1 L1579.0,572.4 L1584.7,563.3 L1589.3,545.1 L1595.0,586.1 L1600.7,586.1 L1605.2,584.9 L1610.5,586.1 L1616.6,584.9 L1622.3,583.8 L1628.0,588.4 L1631.4,577.0 L1637.1,586.1 L1642.8,586.1 L1653.1,586.1 L1658.8,588.4 L1664.4,588.4 L1669.0,588.4 L1674.7,548.5 L1681.5,558.8 L1686.1,565.6 L1690.6,574.7 L1695.2,567.9 L1700.9,586.1 L1706.6,586.1 L1706.6,598.9 Z" fill="#80b6fc"/>
<path d="M436.4,572.4 L441.4,573.6 L447.1,584.9 L452.3,586.1 L457.3,549.6 L463.0,586.1 L468.7,586.1 L477.8,584.9 L484.2,583.4 L489.7,583.8 L496.0,582.7 L505.2,581.5 L510.9,583.8 L517.7,583.8 L522.2,586.1 L526.8,556.5 L531.8,579.3 L537.0,582.0 L543.9,582.7 L553.0,581.1 L558.7,580.4 L564.4,576.5 L570.1,577.4 L574.6,575.8 L580.3,572.4 L586.0,573.6 L594.0,574.7 L601.3,572.4 L606.5,575.8 L612.2,586.1 L617.9,582.7 L623.1,581.5 L628.1,577.0 L633.8,574.7 L638.4,555.3 L648.6,565.6 L654.3,570.1 L660.0,567.9 L670.3,583.8 L677.1,576.5 L686.2,577.0 L696.5,574.7 L702.2,563.3 L707.9,581.5 L718.1,574.7 L723.8,586.1 L734.1,522.3 L739.8,574.7 L744.3,563.3 L750.0,577.0 L754.6,570.1 L760.2,563.3 L765.9,561.0 L771.6,517.8 L776.2,506.4 L781.9,529.1 L787.6,542.8 L792.1,526.9 L797.8,545.1 L803.5,558.8 L809.2,540.5 L814.9,497.3 L819.5,492.7 L824.0,570.1 L828.6,524.6 L835.4,549.6 L841.1,549.6 L845.7,561.0 L854.8,572.4 L861.6,561.0 L867.3,570.1 L872.5,567.9 L877.5,570.1 L887.8,574.7 L898.0,572.4 L904.9,577.0 L909.4,574.7 L915.1,570.1 L920.8,577.0 L925.4,572.4 L931.1,567.9 L936.8,581.5 L942.5,565.6 L947.0,567.9 L955.0,567.9 L960.0,579.9 L967.6,577.5 L973.3,578.1 L978.1,582.9 L983.6,590.8 L989.0,582.9 L993.9,586.5 L999.3,587.2 L1004.8,587.8 L1010.8,585.3 L1015.7,580.5 L1020.5,552.7 L1025.9,587.8 L1031.4,593.2 L1036.2,593.8 L1042.3,592.6 L1047.4,558.1 L1052.6,594.4 L1058.0,593.8 L1064.3,595.2 L1070.0,595.2 L1079.1,595.2 L1090.5,595.2 L1096.2,595.2 L1100.7,595.2 L1106.0,595.2 L1111.0,595.7 L1121.2,595.2 L1126.9,596.3 L1154.3,596.3 L1161.1,597.0 L1202.1,596.3 L1211.2,597.0 L1227.2,595.2 L1234.0,596.8 L1238.5,590.6 L1244.2,541.7 L1249.9,596.8 L1279.5,596.3 L1295.5,596.8 L1302.3,595.2 L1313.7,592.9 L1322.8,594.1 L1328.5,588.4 L1334.2,594.7 L1339.9,594.3 L1345.1,580.4 L1351.3,595.2 L1355.8,594.1 L1361.5,595.2 L1371.8,590.6 L1377.5,595.7 L1384.3,591.8 L1390.0,589.5 L1392.7,589.5 L1398.0,588.4 L1403.2,574.7 L1408.2,589.5 L1413.9,589.5 L1419.6,589.5 L1424.2,586.1 L1429.9,590.6 L1435.6,589.5 L1440.1,587.2 L1445.8,587.2 L1451.5,581.5 L1456.5,586.1 L1467.4,586.1 L1477.7,591.8 L1483.4,587.2 L1489.1,589.5 L1494.8,584.9 L1501.6,586.1 L1509.6,590.6 L1515.3,587.2 L1519.8,581.5 L1526.7,583.8 L1532.3,583.8 L1536.4,582.7 L1541.5,586.1 L1547.2,583.8 L1552.8,579.3 L1558.5,581.5 L1565.4,574.7 L1569.9,572.4 L1574.5,563.3 L1579.0,554.2 L1584.7,563.3 L1589.3,540.5 L1595.0,586.1 L1600.7,583.8 L1605.2,581.5 L1610.5,583.8 L1616.6,581.5 L1622.3,579.3 L1628.0,583.8 L1631.4,574.7 L1637.1,581.5 L1642.8,582.7 L1653.1,582.7 L1658.8,583.8 L1664.4,584.9 L1669.0,586.1 L1674.7,547.4 L1681.5,555.3 L1686.1,561.0 L1690.6,567.9 L1695.2,563.3 L1700.9,583.8 L1706.6,583.8" fill="none" stroke="rgba(43,74,154,0.55)" stroke-width="0.8" stroke-linejoin="round"/>
<path d="M436.4,507.5 L441.4,507.5 L447.1,542.4 L452.3,537.8 L457.3,505.2 L463.0,565.1 L468.7,555.3 L477.8,554.7 L484.2,536.0 L489.7,550.8 L496.0,537.1 L505.2,534.8 L510.9,546.2 L517.7,540.5 L522.2,516.6 L526.8,519.6 L531.8,505.2 L537.0,549.2 L543.9,548.5 L553.0,507.5 L558.7,543.3 L564.4,534.8 L570.1,554.7 L574.6,521.9 L580.3,537.1 L586.0,550.8 L594.0,539.4 L601.3,469.9 L606.5,531.4 L612.2,556.9 L617.9,522.3 L623.1,523.5 L628.1,524.6 L633.8,536.4 L638.4,474.5 L648.6,502.3 L654.3,450.6 L660.0,503.0 L670.3,529.6 L677.1,493.8 L686.2,529.1 L696.5,515.5 L702.2,463.1 L707.9,529.1 L718.1,485.9 L723.8,523.5 L734.1,413.0 L739.8,469.9 L744.3,458.5 L750.0,508.6 L754.6,518.9 L760.2,465.4 L765.9,449.4 L771.6,435.8 L776.2,426.7 L781.9,419.8 L787.6,447.2 L792.1,433.5 L797.8,426.7 L803.5,460.8 L809.2,419.8 L814.9,376.5 L819.5,351.5 L824.0,394.8 L828.6,393.6 L835.4,440.3 L841.1,444.9 L845.7,440.3 L854.8,495.0 L861.6,497.3 L867.3,483.6 L872.5,458.5 L877.5,495.0 L887.8,523.5 L898.0,516.6 L904.9,530.3 L909.4,531.4 L915.1,490.4 L920.8,508.6 L925.4,520.0 L931.1,492.7 L936.8,522.3 L942.5,526.9 L947.0,491.6 L955.0,540.5 L960.0,541.2 L967.6,525.7 L973.3,546.6 L978.1,553.0 L983.6,538.5 L989.0,543.3 L993.9,562.0 L999.3,555.1 L1004.8,563.3 L1010.8,573.2 L1015.7,562.6 L1020.5,541.5 L1025.9,583.8 L1031.4,585.6 L1036.2,589.3 L1042.3,578.1 L1047.4,542.7 L1052.6,571.7 L1058.0,582.9 L1064.3,586.1 L1070.0,592.9 L1079.1,590.6 L1090.5,592.9 L1096.2,579.3 L1100.7,588.4 L1106.0,575.8 L1111.0,592.9 L1121.2,588.4 L1126.9,595.2 L1154.3,593.4 L1161.1,596.3 L1202.1,594.1 L1211.2,596.8 L1227.2,594.1 L1234.0,596.3 L1238.5,590.6 L1244.2,541.7 L1249.9,596.3 L1279.5,595.2 L1295.5,596.3 L1302.3,592.9 L1313.7,587.2 L1322.8,589.5 L1328.5,581.5 L1334.2,592.9 L1339.9,591.8 L1345.1,577.0 L1351.3,592.9 L1355.8,589.5 L1361.5,592.9 L1371.8,586.1 L1377.5,594.1 L1384.3,583.8 L1390.0,564.4 L1392.7,548.5 L1398.0,580.4 L1403.2,563.3 L1408.2,577.0 L1413.9,572.4 L1419.6,580.4 L1424.2,538.3 L1429.9,542.8 L1435.6,571.3 L1440.1,566.7 L1445.8,574.2 L1451.5,564.4 L1456.5,516.6 L1467.4,572.9 L1477.7,579.7 L1483.4,576.5 L1489.1,561.0 L1494.8,566.7 L1501.6,571.3 L1509.6,582.0 L1515.3,555.3 L1519.8,546.2 L1526.7,555.3 L1532.3,569.0 L1536.4,538.3 L1541.5,575.8 L1547.2,564.4 L1552.8,533.7 L1558.5,543.3 L1565.4,528.0 L1569.9,513.2 L1574.5,504.1 L1579.0,455.1 L1584.7,375.4 L1589.3,395.9 L1595.0,459.7 L1600.7,486.3 L1605.2,467.7 L1610.5,421.0 L1616.6,523.5 L1622.3,515.5 L1628.0,528.0 L1631.4,528.0 L1637.1,497.3 L1642.8,513.2 L1653.1,529.1 L1658.8,487.0 L1664.4,523.5 L1669.0,537.1 L1674.7,504.1 L1681.5,509.8 L1686.1,523.5 L1690.6,517.8 L1695.2,537.1 L1700.9,557.6 L1706.6,521.2" fill="none" stroke="#5a9cf5" stroke-width="0.8" stroke-linejoin="round"/>
<rect x="482.9" y="599.9" width="1.5" height="14" fill="#ccd6eb"/>
<text class="ax" text-anchor="end" transform="translate(489.7,624.9) rotate(-45)">16:00</text>
<rect x="589.2" y="599.9" width="1.5" height="14" fill="#ccd6eb"/>
<text class="ax" text-anchor="end" transform="translate(596.0,624.9) rotate(-45)">18:00</text>
<rect x="695.5" y="599.9" width="1.5" height="14" fill="#ccd6eb"/>
<text class="ax" text-anchor="end" transform="translate(702.2,624.9) rotate(-45)">20:00</text>
<rect x="801.7" y="599.9" width="1.5" height="14" fill="#ccd6eb"/>
<text class="ax" text-anchor="end" transform="translate(808.5,624.9) rotate(-45)">22:00</text>
<rect x="908.0" y="599.9" width="1.5" height="14" fill="#ccd6eb"/>
<text class="ax" text-anchor="end" transform="translate(914.7,624.9) rotate(-45)">14. Mar</text>
<rect x="1014.2" y="599.9" width="1.5" height="14" fill="#ccd6eb"/>
<text class="ax" text-anchor="end" transform="translate(1021.0,624.9) rotate(-45)">02:00</text>
<rect x="1120.5" y="599.9" width="1.5" height="14" fill="#ccd6eb"/>
<text class="ax" text-anchor="end" transform="translate(1127.2,624.9) rotate(-45)">04:00</text>
<rect x="1226.7" y="599.9" width="1.5" height="14" fill="#ccd6eb"/>
<text class="ax" text-anchor="end" transform="translate(1233.5,624.9) rotate(-45)">06:00</text>
<rect x="1333.0" y="599.9" width="1.5" height="14" fill="#ccd6eb"/>
<text class="ax" text-anchor="end" transform="translate(1339.7,624.9) rotate(-45)">08:00</text>
<rect x="1439.2" y="599.9" width="1.5" height="14" fill="#ccd6eb"/>
<text class="ax" text-anchor="end" transform="translate(1446.0,624.9) rotate(-45)">10:00</text>
<rect x="1545.5" y="599.9" width="1.5" height="14" fill="#ccd6eb"/>
<text class="ax" text-anchor="end" transform="translate(1552.2,624.9) rotate(-45)">12:00</text>
<rect x="1651.7" y="599.9" width="1.5" height="14" fill="#ccd6eb"/>
<text class="ax" text-anchor="end" transform="translate(1658.5,624.9) rotate(-45)">14:00</text>
<text class="ax" text-anchor="middle" transform="translate(340.0,457.0) rotate(-90)">bps</text>
<circle cx="397.6" cy="826.3" r="5.7" fill="#bdc3c7"/>
<text x="407.1" y="831.8" class="lg">未知流量</text>
<circle cx="498.8" cy="826.3" r="5.7" fill="#0066ff"/>
<text x="508.3" y="831.8" class="lg">常用协议</text>
<circle cx="598.8" cy="826.3" r="5.7" fill="#b0120a"/>
<text x="608.3" y="831.8" class="lg">P2P下载</text>
<circle cx="696.4" cy="826.3" r="5.7" fill="#fdd819"/>
<text x="705.9" y="831.8" class="lg">网络电视</text>
<circle cx="796.8" cy="826.3" r="5.7" fill="#ef3c3f"/>
<text x="806.3" y="831.8" class="lg">社交</text>
<circle cx="866.7" cy="826.3" r="5.7" fill="#6a35e0"/>
<text x="876.2" y="831.8" class="lg">流媒体</text>
<circle cx="953.0" cy="826.3" r="5.7" fill="#29b6f6"/>
<text x="962.5" y="831.8" class="lg">网络电话</text>
<circle cx="1052.5" cy="826.3" r="5.7" fill="#f4a225"/>
<text x="1062.0" y="831.8" class="lg">网络游戏</text>
<circle cx="1153.0" cy="826.3" r="5.7" fill="#a855e0"/>
<text x="1162.5" y="831.8" class="lg">金融财经</text>
<circle cx="1254.0" cy="826.3" r="5.7" fill="#0a3ba0"/>
<text x="1263.5" y="831.8" class="lg">商业系统</text>
<circle cx="1354.3" cy="826.3" r="5.7" fill="#a0fbfb"/>
<text x="1363.8" y="831.8" class="lg">其它</text>
<circle cx="1424.8" cy="826.3" r="5.7" fill="#569ffc"/>
<text x="1434.3" y="831.8" class="lg">HTTP协议</text>
<circle cx="1533.0" cy="826.3" r="5.7" fill="#b8dc3a"/>
<text x="1542.5" y="831.8" class="lg">移动应用</text>
<circle cx="1633.6" cy="826.3" r="5.7" fill="#fbe09d"/>
<text x="1643.1" y="831.8" class="lg">自定义协议</text>
<rect x="423.5" y="859.3" width="1294.5" height="2" fill="#dedede"/>
<text x="397.5" y="867.8" class="ax" text-anchor="end">800M</text>
<rect x="423.5" y="896.3" width="1294.5" height="2" fill="#dedede"/>
<text x="397.5" y="904.8" class="ax" text-anchor="end">700M</text>
<rect x="423.5" y="932.1" width="1294.5" height="2" fill="#dedede"/>
<text x="397.5" y="940.6" class="ax" text-anchor="end">600M</text>
<rect x="423.5" y="966.3" width="1294.5" height="2" fill="#dedede"/>
<text x="397.5" y="974.8" class="ax" text-anchor="end">500M</text>
<rect x="423.5" y="1001.3" width="1294.5" height="2" fill="#dedede"/>
<text x="397.5" y="1009.8" class="ax" text-anchor="end">400M</text>
<rect x="423.5" y="1036.7" width="1294.5" height="2" fill="#dedede"/>
<text x="397.5" y="1045.2" class="ax" text-anchor="end">300M</text>
<rect x="423.5" y="1072.4" width="1294.5" height="2" fill="#dedede"/>
<text x="397.5" y="1080.9" class="ax" text-anchor="end">200M</text>
<rect x="423.5" y="1105.8" width="1294.5" height="2" fill="#dedede"/>
<text x="397.5" y="1114.3" class="ax" text-anchor="end">100M</text>
<rect x="423.5" y="1141.4" width="1294.5" height="2" fill="#dedede"/>
<text x="397.5" y="1149.9" class="ax" text-anchor="end">0</text>
<path d="M436.4,1142.3 L436.4,998.3 L445.9,1000.6 L452.8,1038.1 L457.8,1014.2 L463.0,1040.4 L467.6,1042.7 L473.7,1014.2 L479.0,1022.2 L484.2,969.8 L489.2,1045.0 L494.9,1014.2 L500.6,1062.1 L505.2,1056.4 L510.2,927.7 L516.5,1065.5 L521.1,1023.3 L526.8,1038.1 L532.5,982.3 L537.5,956.2 L542.7,982.3 L547.3,978.9 L553.0,1008.5 L558.7,1040.4 L563.2,1033.6 L568.9,1083.7 L574.6,1008.5 L579.2,1058.6 L584.9,1008.5 L590.6,968.7 L596.3,988.0 L600.8,1045.0 L606.5,974.4 L612.2,1092.8 L616.8,1067.8 L622.5,1009.7 L627.0,1019.9 L632.7,1081.4 L638.4,1035.9 L644.1,1038.1 L649.8,904.9 L655.5,922.0 L660.0,931.1 L664.6,985.8 L670.3,992.6 L676.0,974.4 L680.5,943.6 L686.2,894.7 L691.9,912.9 L696.5,985.8 L702.2,958.4 L707.9,978.9 L712.4,965.3 L718.1,1033.6 L723.8,957.3 L728.4,960.7 L734.1,1063.2 L739.8,947.0 L745.4,945.9 L750.0,949.3 L755.0,1008.5 L760.2,1004.0 L765.9,974.4 L771.0,1022.2 L776.9,992.6 L781.9,1001.7 L787.6,949.3 L793.3,947.0 L797.8,935.7 L803.5,974.4 L809.2,988.0 L813.8,969.8 L818.3,978.9 L824.0,892.4 L829.7,926.5 L835.4,997.2 L840.0,947.0 L845.7,1008.5 L851.4,1029.0 L855.9,976.7 L861.6,992.6 L866.2,1051.8 L871.9,972.1 L877.5,976.7 L883.2,1013.1 L888.9,994.9 L893.5,942.5 L899.2,1024.5 L904.9,1047.3 L910.6,997.2 L917.4,1026.8 L920.8,1051.8 L926.5,1006.3 L931.1,1013.1 L936.8,974.4 L941.3,981.2 L945.9,1029.0 L951.6,1029.0 L957.3,1067.8 L961.8,1026.8 L967.5,1099.6 L973.2,1024.5 L978.9,1076.9 L986.9,1056.4 L993.7,1060.9 L999.4,1111.0 L1009.6,1088.3 L1015.3,1099.6 L1021.0,1055.2 L1031.3,1104.2 L1037.0,1104.2 L1047.2,1122.4 L1057.5,1104.2 L1063.2,1124.7 L1070.0,1124.7 L1079.1,1113.3 L1084.8,1122.4 L1090.5,1121.3 L1095.1,1124.7 L1100.7,1112.2 L1106.4,1128.1 L1112.1,1128.1 L1116.7,1122.4 L1121.2,1134.9 L1128.1,1132.7 L1138.3,1136.1 L1142.9,1131.5 L1148.6,1139.5 L1154.3,1133.8 L1164.5,1139.5 L1169.1,1131.5 L1174.8,1138.4 L1180.5,1134.9 L1186.2,1140.6 L1191.9,1137.2 L1211.2,1140.6 L1222.6,1137.2 L1228.3,1089.4 L1232.8,1136.1 L1238.5,1058.6 L1244.2,1133.8 L1249.9,1128.1 L1254.5,1138.4 L1260.2,1132.7 L1265.9,1141.1 L1270.4,1137.2 L1279.5,1136.1 L1286.4,1120.1 L1292.1,1134.9 L1297.8,1130.4 L1302.3,1094.0 L1308.0,1131.5 L1313.2,1065.5 L1318.3,1117.9 L1324.0,1084.8 L1329.6,1090.5 L1334.2,1106.5 L1339.9,1111.0 L1345.6,1091.7 L1350.1,1087.1 L1361.5,1108.8 L1366.1,1092.8 L1371.8,1055.2 L1377.5,1116.7 L1383.2,1097.4 L1387.7,1048.4 L1390.0,1070.0 L1393.4,1106.5 L1398.7,1035.9 L1409.4,1056.4 L1413.9,1045.0 L1419.6,1067.8 L1425.3,1033.6 L1430.5,1054.1 L1435.6,937.9 L1440.6,1024.5 L1445.8,1029.0 L1451.0,983.5 L1458.3,1079.1 L1467.4,1015.4 L1473.1,1065.5 L1477.7,1067.8 L1483.4,1040.4 L1493.6,1099.6 L1498.2,1013.1 L1505.0,1056.4 L1515.3,990.3 L1519.8,1010.8 L1525.5,1072.3 L1535.8,1015.4 L1547.2,1101.9 L1552.8,1065.5 L1558.5,1090.5 L1562.0,999.4 L1568.8,942.5 L1583.6,1035.9 L1590.0,942.5 L1595.0,985.8 L1599.5,1004.0 L1605.2,928.8 L1610.9,1022.2 L1617.8,1022.2 L1622.3,967.5 L1631.4,912.9 L1637.1,994.9 L1642.8,942.5 L1647.4,976.7 L1653.1,960.7 L1658.8,1017.7 L1663.3,1035.9 L1669.0,1008.5 L1674.7,1099.6 L1681.5,1004.0 L1686.1,992.6 L1690.6,990.3 L1696.3,1105.3 L1701.6,1040.4 L1706.6,1058.6 L1706.6,1142.3 Z" fill="#cdd1d4"/>
<path d="M436.4,1142.3 L436.4,1000.6 L445.9,1004.0 L452.8,1039.3 L457.8,1029.0 L463.0,1041.6 L467.6,1043.8 L473.7,1016.5 L479.0,1023.3 L484.2,981.2 L489.2,1046.1 L494.9,1019.9 L500.6,1063.2 L505.2,1057.5 L510.2,928.8 L516.5,1066.6 L521.1,1029.0 L526.8,1039.3 L532.5,983.5 L537.5,964.1 L542.7,983.5 L547.3,980.1 L553.0,1009.7 L558.7,1041.6 L563.2,1034.7 L568.9,1084.8 L574.6,1009.7 L579.2,1059.8 L584.9,1009.7 L590.6,976.7 L596.3,992.6 L600.8,1046.1 L606.5,976.7 L612.2,1094.0 L616.8,1070.0 L622.5,1017.7 L627.0,1022.2 L632.7,1082.6 L638.4,1038.1 L644.1,1040.4 L649.8,917.4 L655.5,960.7 L660.0,961.9 L664.6,988.0 L670.3,993.1 L676.0,976.7 L680.5,944.8 L686.2,899.2 L691.9,915.2 L696.5,988.0 L702.2,960.7 L707.9,981.2 L712.4,967.5 L718.1,1035.9 L723.8,960.7 L728.4,963.0 L734.1,1065.5 L739.8,957.3 L745.4,951.6 L750.0,951.6 L755.0,1010.8 L760.2,1006.3 L765.9,976.7 L771.0,1024.5 L776.9,997.2 L781.9,1004.0 L787.6,956.2 L793.3,949.3 L797.8,940.2 L803.5,976.7 L809.2,990.3 L813.8,972.1 L818.3,981.2 L824.0,901.5 L829.7,928.8 L835.4,999.4 L840.0,956.2 L845.7,1010.8 L851.4,1030.2 L855.9,981.2 L861.6,994.9 L866.2,1053.0 L871.9,978.9 L877.5,983.5 L883.2,1015.4 L888.9,996.0 L893.5,943.6 L899.2,1029.0 L904.9,1048.4 L910.6,999.4 L917.4,1027.9 L920.8,1053.0 L926.5,1013.1 L931.1,1015.4 L936.8,981.2 L941.3,985.8 L945.9,1031.3 L951.6,1030.2 L957.3,1068.9 L961.8,1029.0 L967.5,1100.8 L973.2,1026.8 L978.9,1078.0 L986.9,1058.6 L993.7,1063.2 L999.4,1112.2 L1009.6,1090.5 L1015.3,1100.8 L1021.0,1056.4 L1031.3,1105.3 L1037.0,1105.3 L1047.2,1123.6 L1057.5,1105.3 L1063.2,1125.8 L1070.0,1125.8 L1079.1,1114.4 L1084.8,1124.7 L1090.5,1122.4 L1095.1,1125.8 L1100.7,1113.3 L1106.4,1129.3 L1112.1,1129.3 L1116.7,1123.6 L1121.2,1135.4 L1128.1,1133.4 L1138.3,1136.5 L1142.9,1132.7 L1148.6,1139.7 L1154.3,1134.3 L1164.5,1139.7 L1169.1,1132.7 L1174.8,1138.8 L1180.5,1135.6 L1186.2,1140.9 L1191.9,1138.4 L1211.2,1140.9 L1222.6,1137.2 L1228.3,1089.4 L1232.8,1136.1 L1238.5,1058.6 L1244.2,1133.8 L1249.9,1128.1 L1254.5,1138.4 L1260.2,1132.7 L1265.9,1141.1 L1270.4,1137.2 L1279.5,1136.1 L1286.4,1120.1 L1292.1,1134.9 L1297.8,1130.4 L1302.3,1094.0 L1308.0,1131.5 L1313.2,1065.5 L1318.3,1117.9 L1324.0,1087.1 L1329.6,1091.7 L1334.2,1107.6 L1339.9,1112.2 L1345.6,1092.8 L1350.1,1088.3 L1361.5,1109.9 L1366.1,1094.0 L1371.8,1056.4 L1377.5,1117.9 L1383.2,1098.5 L1387.7,1051.8 L1390.0,1072.3 L1393.4,1107.6 L1398.7,1038.1 L1409.4,1057.5 L1413.9,1046.1 L1419.6,1068.9 L1425.3,1034.7 L1430.5,1055.2 L1435.6,940.2 L1440.6,1026.8 L1445.8,1030.2 L1451.0,985.8 L1458.3,1080.3 L1467.4,1016.5 L1473.1,1066.6 L1477.7,1068.9 L1483.4,1041.6 L1493.6,1100.1 L1498.2,1014.2 L1505.0,1058.6 L1515.3,992.6 L1519.8,1012.0 L1525.5,1073.5 L1535.8,1016.5 L1547.2,1102.4 L1552.8,1066.6 L1558.5,1091.7 L1562.0,1001.7 L1568.8,953.9 L1583.6,1037.0 L1590.0,944.8 L1595.0,990.3 L1599.5,1005.1 L1605.2,931.1 L1610.9,1024.5 L1617.8,1024.5 L1622.3,969.8 L1631.4,917.4 L1637.1,997.2 L1642.8,944.8 L1647.4,978.9 L1653.1,965.3 L1658.8,1022.2 L1663.3,1038.1 L1669.0,1015.4 L1674.7,1100.1 L1681.5,1006.3 L1686.1,994.9 L1690.6,992.6 L1696.3,1105.3 L1701.6,1041.6 L1706.6,1059.8 L1706.6,1142.3 Z" fill="#3f8bfe"/>
<path d="M436.4,1142.3 L436.4,1008.5 L445.9,1008.5 L452.8,1040.4 L457.8,1030.2 L463.0,1045.0 L467.6,1046.1 L473.7,1019.9 L479.0,1024.5 L484.2,988.0 L489.2,1047.3 L494.9,1022.2 L500.6,1064.3 L505.2,1058.6 L510.2,930.0 L516.5,1067.8 L521.1,1031.3 L526.8,1040.4 L532.5,985.8 L537.5,969.8 L542.7,985.8 L547.3,981.2 L553.0,1013.1 L558.7,1042.7 L563.2,1035.9 L568.9,1086.0 L574.6,1010.8 L579.2,1060.9 L584.9,1010.8 L590.6,985.8 L596.3,999.4 L600.8,1047.3 L606.5,985.8 L612.2,1095.1 L616.8,1076.9 L622.5,1033.6 L627.0,1040.4 L632.7,1083.7 L638.4,1042.7 L644.1,1040.4 L649.8,942.5 L655.5,1017.7 L660.0,1019.9 L664.6,1038.1 L670.3,1033.6 L676.0,1013.1 L680.5,997.2 L686.2,1010.8 L691.9,990.3 L696.5,1056.4 L702.2,1042.7 L707.9,1060.9 L712.4,1045.0 L718.1,1067.8 L723.8,1029.0 L728.4,1013.1 L734.1,1067.8 L739.8,1058.6 L745.4,974.4 L750.0,1033.6 L755.0,1040.4 L760.2,1056.4 L765.9,1026.8 L771.0,1033.6 L776.9,1013.1 L781.9,1019.9 L787.6,958.4 L793.3,965.3 L797.8,981.2 L803.5,1026.8 L809.2,999.4 L813.8,988.0 L818.3,1013.1 L824.0,940.2 L829.7,931.1 L835.4,1004.0 L840.0,958.4 L845.7,1017.7 L851.4,1031.3 L855.9,985.8 L861.6,1004.0 L866.2,1054.1 L871.9,985.8 L877.5,994.9 L883.2,1019.9 L888.9,999.4 L893.5,944.8 L899.2,1035.9 L904.9,1049.5 L910.6,1001.7 L917.4,1029.0 L920.8,1054.1 L926.5,1015.4 L931.1,1017.7 L936.8,985.8 L941.3,988.0 L945.9,1033.6 L951.6,1031.3 L957.3,1070.0 L961.8,1031.3 L967.5,1101.9 L973.2,1029.0 L978.9,1079.1 L986.9,1063.2 L993.7,1067.8 L999.4,1113.3 L1009.6,1095.1 L1015.3,1101.9 L1021.0,1057.5 L1031.3,1106.5 L1037.0,1106.5 L1047.2,1124.7 L1057.5,1113.3 L1063.2,1127.0 L1070.0,1126.5 L1079.1,1115.1 L1084.8,1127.0 L1090.5,1123.6 L1095.1,1127.0 L1100.7,1128.1 L1106.4,1133.8 L1112.1,1132.7 L1116.7,1132.7 L1121.2,1136.1 L1128.1,1133.8 L1138.3,1137.0 L1142.9,1136.1 L1148.6,1140.0 L1154.3,1134.7 L1164.5,1140.0 L1169.1,1137.2 L1174.8,1139.3 L1180.5,1138.4 L1186.2,1141.1 L1191.9,1140.2 L1211.2,1141.1 L1222.6,1137.2 L1228.3,1089.4 L1232.8,1136.1 L1238.5,1058.6 L1244.2,1133.8 L1249.9,1128.1 L1254.5,1138.4 L1260.2,1132.7 L1265.9,1141.1 L1270.4,1137.2 L1279.5,1136.1 L1286.4,1120.1 L1292.1,1134.9 L1297.8,1130.4 L1302.3,1094.0 L1308.0,1131.5 L1313.2,1065.5 L1318.3,1117.9 L1324.0,1088.3 L1329.6,1092.8 L1334.2,1108.8 L1339.9,1113.3 L1345.6,1099.6 L1350.1,1095.1 L1361.5,1111.0 L1366.1,1104.2 L1371.8,1058.6 L1377.5,1119.0 L1383.2,1101.9 L1387.7,1070.0 L1390.0,1076.9 L1393.4,1107.6 L1398.7,1083.7 L1409.4,1097.4 L1413.9,1099.6 L1419.6,1108.8 L1425.3,1049.5 L1430.5,1090.5 L1435.6,1008.5 L1440.6,1067.8 L1445.8,1076.9 L1451.0,1004.0 L1458.3,1081.4 L1467.4,1017.7 L1473.1,1067.8 L1477.7,1070.0 L1483.4,1047.3 L1493.6,1100.8 L1498.2,1015.4 L1505.0,1059.8 L1515.3,1029.0 L1519.8,1013.1 L1525.5,1074.6 L1535.8,1017.7 L1547.2,1103.1 L1552.8,1067.8 L1558.5,1092.8 L1562.0,1004.0 L1568.8,958.4 L1583.6,1038.1 L1590.0,947.0 L1595.0,999.4 L1599.5,1008.5 L1605.2,988.0 L1610.9,1026.8 L1617.8,1024.5 L1622.3,1022.2 L1631.4,963.0 L1637.1,1058.6 L1642.8,994.9 L1647.4,1031.3 L1653.1,967.5 L1658.8,1035.9 L1663.3,1040.4 L1669.0,1019.9 L1674.7,1100.8 L1681.5,1019.9 L1686.1,1006.3 L1690.6,994.9 L1696.3,1105.3 L1701.6,1042.7 L1706.6,1060.9 L1706.6,1142.3 Z" fill="#fde152"/>
<path d="M436.4,1142.3 L436.4,1012.0 L445.9,1029.0 L452.8,1047.3 L457.8,1031.3 L463.0,1058.6 L467.6,1058.6 L473.7,1022.2 L479.0,1040.4 L484.2,994.9 L489.2,1049.5 L494.9,1026.8 L500.6,1065.5 L505.2,1070.0 L510.2,931.1 L516.5,1068.9 L521.1,1033.6 L526.8,1045.0 L532.5,990.3 L537.5,974.4 L542.7,1004.0 L547.3,1001.7 L553.0,1015.4 L558.7,1054.1 L563.2,1049.5 L568.9,1087.1 L574.6,1031.3 L579.2,1063.2 L584.9,1015.4 L590.6,990.3 L596.3,1001.7 L600.8,1049.5 L606.5,990.3 L612.2,1096.2 L616.8,1079.1 L622.5,1038.1 L627.0,1051.8 L632.7,1084.8 L638.4,1049.5 L644.1,1045.0 L649.8,958.4 L655.5,1029.0 L660.0,1033.6 L664.6,1042.7 L670.3,1040.4 L676.0,1019.9 L680.5,999.4 L686.2,1013.1 L691.9,992.6 L696.5,1063.2 L702.2,1045.0 L707.9,1065.5 L712.4,1051.8 L718.1,1081.4 L723.8,1040.4 L728.4,1038.1 L734.1,1070.0 L739.8,1060.9 L745.4,978.9 L750.0,1056.4 L755.0,1054.1 L760.2,1067.8 L765.9,1058.6 L771.0,1074.6 L776.9,1033.6 L781.9,1045.0 L787.6,990.3 L793.3,985.8 L797.8,1004.0 L803.5,1054.1 L809.2,1017.7 L813.8,1006.3 L818.3,1038.1 L824.0,958.4 L829.7,967.5 L835.4,1019.9 L840.0,972.1 L845.7,1040.4 L851.4,1045.0 L855.9,1010.8 L861.6,1024.5 L866.2,1056.4 L871.9,994.9 L877.5,1010.8 L883.2,1029.0 L888.9,1001.7 L893.5,949.3 L899.2,1045.0 L904.9,1056.4 L910.6,1010.8 L917.4,1040.4 L920.8,1056.4 L926.5,1022.2 L931.1,1031.3 L936.8,992.6 L941.3,990.3 L945.9,1051.8 L951.6,1033.6 L957.3,1071.2 L961.8,1033.6 L967.5,1101.9 L973.2,1031.3 L978.9,1081.4 L986.9,1065.5 L993.7,1070.0 L999.4,1115.6 L1009.6,1096.2 L1015.3,1103.1 L1021.0,1058.6 L1031.3,1107.6 L1037.0,1107.6 L1047.2,1125.8 L1057.5,1114.4 L1063.2,1128.1 L1070.0,1127.0 L1079.1,1115.6 L1084.8,1128.1 L1090.5,1124.2 L1095.1,1127.4 L1100.7,1128.8 L1106.4,1134.3 L1112.1,1133.4 L1116.7,1133.4 L1121.2,1136.5 L1128.1,1134.3 L1138.3,1137.5 L1142.9,1136.5 L1148.6,1140.2 L1154.3,1135.2 L1164.5,1140.2 L1169.1,1137.5 L1174.8,1139.7 L1180.5,1138.8 L1186.2,1141.3 L1191.9,1140.4 L1211.2,1141.3 L1222.6,1137.2 L1228.3,1089.4 L1232.8,1136.1 L1238.5,1058.6 L1244.2,1133.8 L1249.9,1128.1 L1254.5,1138.4 L1260.2,1132.7 L1265.9,1141.1 L1270.4,1137.2 L1279.5,1136.1 L1286.4,1120.1 L1292.1,1134.9 L1297.8,1130.4 L1302.3,1094.0 L1308.0,1131.5 L1313.2,1066.6 L1318.3,1117.9 L1324.0,1089.4 L1329.6,1094.0 L1334.2,1111.0 L1339.9,1115.6 L1345.6,1100.8 L1350.1,1096.2 L1361.5,1112.2 L1366.1,1106.5 L1371.8,1060.9 L1377.5,1120.1 L1383.2,1104.2 L1387.7,1101.9 L1390.0,1090.5 L1393.4,1108.3 L1398.7,1095.1 L1409.4,1099.6 L1413.9,1100.8 L1419.6,1109.9 L1425.3,1050.7 L1430.5,1091.7 L1435.6,1013.1 L1440.6,1074.6 L1445.8,1079.1 L1451.0,1013.1 L1458.3,1083.7 L1467.4,1018.8 L1473.1,1072.3 L1477.7,1090.5 L1483.4,1049.5 L1493.6,1101.5 L1498.2,1017.7 L1505.0,1060.9 L1515.3,1031.3 L1519.8,1015.4 L1525.5,1075.7 L1535.8,1022.2 L1547.2,1103.7 L1552.8,1086.0 L1558.5,1095.1 L1562.0,1006.3 L1568.8,985.8 L1583.6,1040.4 L1590.0,967.5 L1595.0,1040.4 L1599.5,1026.8 L1605.2,1019.9 L1610.9,1058.6 L1617.8,1058.6 L1622.3,1049.5 L1631.4,985.8 L1637.1,1067.8 L1642.8,1035.9 L1647.4,1045.0 L1653.1,997.2 L1658.8,1038.1 L1663.3,1049.5 L1669.0,1024.5 L1674.7,1101.5 L1681.5,1035.9 L1686.1,1038.1 L1690.6,997.2 L1696.3,1105.3 L1701.6,1049.5 L1706.6,1063.2 L1706.6,1142.3 Z" fill="#f26c6e"/>
<path d="M436.4,1142.3 L436.4,1015.4 L445.9,1031.3 L452.8,1049.5 L457.8,1032.5 L463.0,1065.5 L467.6,1060.9 L473.7,1026.8 L479.0,1042.7 L484.2,999.4 L489.2,1050.7 L494.9,1033.6 L500.6,1071.2 L505.2,1071.2 L510.2,933.4 L516.5,1070.0 L521.1,1038.1 L526.8,1046.1 L532.5,999.4 L537.5,992.6 L542.7,1008.5 L547.3,1010.8 L553.0,1022.2 L558.7,1060.9 L563.2,1054.1 L568.9,1088.3 L574.6,1040.4 L579.2,1065.5 L584.9,1019.9 L590.6,994.9 L596.3,1004.0 L600.8,1051.8 L606.5,994.9 L612.2,1097.4 L616.8,1081.4 L622.5,1047.3 L627.0,1054.1 L632.7,1086.0 L638.4,1056.4 L644.1,1049.5 L649.8,976.7 L655.5,1038.1 L660.0,1040.4 L664.6,1046.1 L670.3,1043.8 L676.0,1024.5 L680.5,1004.0 L686.2,1015.4 L691.9,994.9 L696.5,1067.8 L702.2,1047.3 L707.9,1070.0 L712.4,1054.1 L718.1,1086.0 L723.8,1042.7 L728.4,1040.4 L734.1,1074.6 L739.8,1063.2 L745.4,1004.0 L750.0,1058.6 L755.0,1056.4 L760.2,1076.9 L765.9,1074.6 L771.0,1079.1 L776.9,1035.9 L781.9,1047.3 L787.6,994.9 L793.3,990.3 L797.8,1008.5 L803.5,1056.4 L809.2,1024.5 L813.8,1013.1 L818.3,1040.4 L824.0,967.5 L829.7,969.8 L835.4,1022.2 L840.0,976.7 L845.7,1049.5 L851.4,1049.5 L855.9,1017.7 L861.6,1033.6 L866.2,1058.6 L871.9,999.4 L877.5,1017.7 L883.2,1033.6 L888.9,1004.0 L893.5,953.9 L899.2,1054.1 L904.9,1058.6 L910.6,1019.9 L917.4,1045.0 L920.8,1058.6 L926.5,1024.5 L931.1,1035.9 L936.8,997.2 L941.3,994.9 L945.9,1054.1 L951.6,1035.9 L957.3,1072.3 L961.8,1035.9 L967.5,1101.9 L973.2,1033.6 L978.9,1086.0 L986.9,1070.0 L993.7,1072.3 L999.4,1117.9 L1009.6,1097.4 L1015.3,1104.2 L1021.0,1059.8 L1031.3,1112.2 L1037.0,1113.3 L1047.2,1127.0 L1057.5,1115.6 L1063.2,1128.8 L1070.0,1127.4 L1079.1,1116.0 L1084.8,1129.3 L1090.5,1124.7 L1095.1,1128.1 L1100.7,1129.3 L1106.4,1134.9 L1112.1,1133.8 L1116.7,1133.8 L1121.2,1137.0 L1128.1,1134.7 L1138.3,1137.9 L1142.9,1137.0 L1148.6,1140.4 L1154.3,1135.6 L1164.5,1140.4 L1169.1,1137.9 L1174.8,1140.2 L1180.5,1139.3 L1186.2,1141.6 L1191.9,1140.6 L1211.2,1141.6 L1222.6,1137.2 L1228.3,1089.4 L1232.8,1136.1 L1238.5,1058.6 L1244.2,1133.8 L1249.9,1128.1 L1254.5,1138.4 L1260.2,1132.7 L1265.9,1141.1 L1270.4,1137.2 L1279.5,1136.1 L1286.4,1120.1 L1292.1,1134.9 L1297.8,1130.4 L1302.3,1094.0 L1308.0,1131.5 L1313.2,1067.3 L1318.3,1117.9 L1324.0,1090.1 L1329.6,1095.1 L1334.2,1112.2 L1339.9,1116.7 L1345.6,1101.9 L1350.1,1097.4 L1361.5,1113.3 L1366.1,1108.8 L1371.8,1063.2 L1377.5,1121.3 L1383.2,1106.5 L1387.7,1104.2 L1390.0,1099.6 L1393.4,1108.8 L1398.7,1096.2 L1409.4,1100.1 L1413.9,1101.9 L1419.6,1110.6 L1425.3,1051.8 L1430.5,1092.4 L1435.6,1015.4 L1440.6,1076.9 L1445.8,1080.3 L1451.0,1017.7 L1458.3,1084.8 L1467.4,1019.9 L1473.1,1074.6 L1477.7,1095.1 L1483.4,1050.7 L1493.6,1101.9 L1498.2,1019.9 L1505.0,1062.1 L1515.3,1033.6 L1519.8,1017.7 L1525.5,1076.9 L1535.8,1024.5 L1547.2,1104.2 L1552.8,1088.3 L1558.5,1097.4 L1562.0,1008.5 L1568.8,990.3 L1583.6,1045.0 L1590.0,972.1 L1595.0,1045.0 L1599.5,1035.9 L1605.2,1026.8 L1610.9,1060.9 L1617.8,1060.9 L1622.3,1051.8 L1631.4,990.3 L1637.1,1070.0 L1642.8,1040.4 L1647.4,1049.5 L1653.1,1004.0 L1658.8,1042.7 L1663.3,1051.8 L1669.0,1029.0 L1674.7,1101.9 L1681.5,1040.4 L1686.1,1040.4 L1690.6,999.4 L1696.3,1105.3 L1701.6,1051.8 L1706.6,1065.5 L1706.6,1142.3 Z" fill="#f6b85b"/>
<path d="M436.4,1142.3 L436.4,1019.9 L445.9,1035.9 L452.8,1051.8 L457.8,1034.7 L463.0,1070.0 L467.6,1067.8 L473.7,1031.3 L479.0,1063.2 L484.2,1004.0 L489.2,1051.8 L494.9,1038.1 L500.6,1072.3 L505.2,1072.3 L510.2,953.9 L516.5,1070.0 L521.1,1045.0 L526.8,1047.3 L532.5,1004.0 L537.5,999.4 L542.7,1013.1 L547.3,1019.9 L553.0,1026.8 L558.7,1064.3 L563.2,1056.4 L568.9,1088.3 L574.6,1042.7 L579.2,1066.6 L584.9,1022.2 L590.6,1004.0 L596.3,1006.3 L600.8,1058.6 L606.5,997.2 L612.2,1098.5 L616.8,1083.7 L622.5,1051.8 L627.0,1056.4 L632.7,1087.1 L638.4,1058.6 L644.1,1056.4 L649.8,981.2 L655.5,1045.0 L660.0,1049.5 L664.6,1049.5 L670.3,1047.3 L676.0,1029.0 L680.5,1013.1 L686.2,1017.7 L691.9,997.2 L696.5,1072.3 L702.2,1049.5 L707.9,1072.3 L712.4,1056.4 L718.1,1095.1 L723.8,1045.0 L728.4,1042.7 L734.1,1076.9 L739.8,1076.9 L745.4,1006.3 L750.0,1063.2 L755.0,1058.6 L760.2,1083.7 L765.9,1081.4 L771.0,1083.7 L776.9,1038.1 L781.9,1051.8 L787.6,999.4 L793.3,997.2 L797.8,1013.1 L803.5,1060.9 L809.2,1031.3 L813.8,1022.2 L818.3,1049.5 L824.0,969.8 L829.7,972.1 L835.4,1024.5 L840.0,981.2 L845.7,1054.1 L851.4,1058.6 L855.9,1024.5 L861.6,1040.4 L866.2,1063.2 L871.9,1006.3 L877.5,1022.2 L883.2,1038.1 L888.9,1008.5 L893.5,958.4 L899.2,1058.6 L904.9,1063.2 L910.6,1026.8 L917.4,1049.5 L920.8,1063.2 L926.5,1029.0 L931.1,1042.7 L936.8,1001.7 L941.3,999.4 L945.9,1056.4 L951.6,1049.5 L957.3,1074.6 L961.8,1038.1 L967.5,1101.9 L973.2,1038.1 L978.9,1088.3 L986.9,1074.6 L993.7,1074.6 L999.4,1120.1 L1009.6,1098.5 L1015.3,1106.5 L1021.0,1060.9 L1031.3,1116.7 L1037.0,1117.9 L1047.2,1129.3 L1057.5,1117.9 L1063.2,1129.3 L1070.0,1128.1 L1079.1,1116.7 L1084.8,1131.5 L1090.5,1125.8 L1095.1,1129.3 L1100.7,1130.4 L1106.4,1135.6 L1112.1,1134.3 L1116.7,1134.3 L1121.2,1137.5 L1128.1,1135.2 L1138.3,1138.4 L1142.9,1137.5 L1148.6,1140.6 L1154.3,1136.1 L1164.5,1140.6 L1169.1,1138.4 L1174.8,1140.6 L1180.5,1139.7 L1186.2,1141.8 L1191.9,1140.9 L1211.2,1141.8 L1222.6,1137.2 L1228.3,1089.4 L1232.8,1136.1 L1238.5,1058.6 L1244.2,1133.8 L1249.9,1128.1 L1254.5,1138.4 L1260.2,1132.7 L1265.9,1141.1 L1270.4,1137.2 L1279.5,1136.1 L1286.4,1120.1 L1292.1,1134.9 L1297.8,1130.4 L1302.3,1094.0 L1308.0,1131.5 L1313.2,1067.8 L1318.3,1117.9 L1324.0,1090.5 L1329.6,1096.2 L1334.2,1113.3 L1339.9,1117.9 L1345.6,1104.2 L1350.1,1099.6 L1361.5,1115.6 L1366.1,1109.9 L1371.8,1065.5 L1377.5,1122.4 L1383.2,1108.8 L1387.7,1106.5 L1390.0,1101.9 L1393.4,1109.2 L1398.7,1097.4 L1409.4,1100.8 L1413.9,1103.1 L1419.6,1111.0 L1425.3,1053.0 L1430.5,1092.8 L1435.6,1017.7 L1440.6,1078.0 L1445.8,1081.4 L1451.0,1019.9 L1458.3,1086.0 L1467.4,1021.1 L1473.1,1076.9 L1477.7,1097.4 L1483.4,1051.8 L1493.6,1101.9 L1498.2,1022.2 L1505.0,1063.2 L1515.3,1035.9 L1519.8,1019.9 L1525.5,1078.0 L1535.8,1026.8 L1547.2,1104.2 L1552.8,1089.4 L1558.5,1099.6 L1562.0,1010.8 L1568.8,994.9 L1583.6,1049.5 L1590.0,976.7 L1595.0,1049.5 L1599.5,1040.4 L1605.2,1031.3 L1610.9,1063.2 L1617.8,1063.2 L1622.3,1054.1 L1631.4,994.9 L1637.1,1072.3 L1642.8,1054.1 L1647.4,1054.1 L1653.1,1008.5 L1658.8,1045.0 L1663.3,1056.4 L1669.0,1031.3 L1674.7,1101.9 L1681.5,1042.7 L1686.1,1045.0 L1690.6,1001.7 L1696.3,1105.3 L1701.6,1054.1 L1706.6,1067.8 L1706.6,1142.3 Z" fill="#b7fbfb"/>
<path d="M436.4,1142.3 L436.4,1022.2 L445.9,1038.1 L452.8,1053.0 L457.8,1035.9 L463.0,1072.3 L467.6,1070.0 L473.7,1033.6 L479.0,1067.8 L484.2,1008.5 L489.2,1054.1 L494.9,1040.4 L500.6,1073.5 L505.2,1073.5 L510.2,958.4 L516.5,1070.0 L521.1,1049.5 L526.8,1049.5 L532.5,1008.5 L537.5,1001.7 L542.7,1017.7 L547.3,1022.2 L553.0,1029.0 L558.7,1065.5 L563.2,1058.6 L568.9,1088.3 L574.6,1045.0 L579.2,1067.8 L584.9,1024.5 L590.6,1008.5 L596.3,1008.5 L600.8,1060.9 L606.5,999.4 L612.2,1099.6 L616.8,1086.0 L622.5,1054.1 L627.0,1058.6 L632.7,1088.3 L638.4,1060.9 L644.1,1058.6 L649.8,985.8 L655.5,1056.4 L660.0,1051.8 L664.6,1051.8 L670.3,1049.5 L676.0,1031.3 L680.5,1017.7 L686.2,1019.9 L691.9,999.4 L696.5,1092.8 L702.2,1051.8 L707.9,1074.6 L712.4,1058.6 L718.1,1099.6 L723.8,1047.3 L728.4,1045.0 L734.1,1081.4 L739.8,1081.4 L745.4,1008.5 L750.0,1065.5 L755.0,1060.9 L760.2,1088.3 L765.9,1086.0 L771.0,1088.3 L776.9,1040.4 L781.9,1054.1 L787.6,1004.0 L793.3,999.4 L797.8,1017.7 L803.5,1065.5 L809.2,1035.9 L813.8,1026.8 L818.3,1054.1 L824.0,974.4 L829.7,976.7 L835.4,1026.8 L840.0,985.8 L845.7,1056.4 L851.4,1060.9 L855.9,1026.8 L861.6,1042.7 L866.2,1065.5 L871.9,1008.5 L877.5,1024.5 L883.2,1040.4 L888.9,1010.8 L893.5,963.0 L899.2,1060.9 L904.9,1065.5 L910.6,1029.0 L917.4,1051.8 L920.8,1065.5 L926.5,1031.3 L931.1,1045.0 L936.8,1004.0 L941.3,1001.7 L945.9,1072.3 L951.6,1054.1 L957.3,1076.9 L961.8,1040.4 L967.5,1101.9 L973.2,1040.4 L978.9,1090.5 L986.9,1076.9 L993.7,1076.9 L999.4,1122.4 L1009.6,1099.6 L1015.3,1108.8 L1021.0,1062.1 L1031.3,1117.9 L1037.0,1119.0 L1047.2,1130.4 L1057.5,1119.0 L1063.2,1130.4 L1070.0,1128.8 L1079.1,1117.9 L1084.8,1133.8 L1090.5,1126.5 L1095.1,1129.7 L1100.7,1131.1 L1106.4,1136.1 L1112.1,1134.7 L1116.7,1134.7 L1121.2,1137.9 L1128.1,1135.6 L1138.3,1138.8 L1142.9,1137.9 L1148.6,1140.6 L1154.3,1136.1 L1164.5,1140.6 L1169.1,1138.4 L1174.8,1140.6 L1180.5,1139.7 L1186.2,1141.8 L1191.9,1140.9 L1211.2,1141.8 L1222.6,1137.2 L1228.3,1089.4 L1232.8,1136.1 L1238.5,1058.6 L1244.2,1133.8 L1249.9,1128.1 L1254.5,1138.4 L1260.2,1132.7 L1265.9,1141.1 L1270.4,1137.2 L1279.5,1136.1 L1286.4,1120.1 L1292.1,1134.9 L1297.8,1130.4 L1302.3,1094.0 L1308.0,1131.5 L1313.2,1068.2 L1318.3,1117.9 L1324.0,1091.0 L1329.6,1097.4 L1334.2,1114.4 L1339.9,1119.0 L1345.6,1106.5 L1350.1,1101.9 L1361.5,1117.9 L1366.1,1111.0 L1371.8,1067.8 L1377.5,1123.6 L1383.2,1111.0 L1387.7,1108.8 L1390.0,1104.2 L1393.4,1109.9 L1398.7,1099.6 L1409.4,1101.9 L1413.9,1104.2 L1419.6,1111.0 L1425.3,1054.1 L1430.5,1092.8 L1435.6,1019.9 L1440.6,1079.1 L1445.8,1081.4 L1451.0,1022.2 L1458.3,1086.0 L1467.4,1022.2 L1473.1,1079.1 L1477.7,1099.6 L1483.4,1054.1 L1493.6,1101.9 L1498.2,1024.5 L1505.0,1063.2 L1515.3,1038.1 L1519.8,1022.2 L1525.5,1079.1 L1535.8,1029.0 L1547.2,1104.2 L1552.8,1090.5 L1558.5,1101.9 L1562.0,1013.1 L1568.8,999.4 L1583.6,1070.0 L1590.0,981.2 L1595.0,1058.6 L1599.5,1045.0 L1605.2,1035.9 L1610.9,1065.5 L1617.8,1065.5 L1622.3,1056.4 L1631.4,999.4 L1637.1,1074.6 L1642.8,1063.2 L1647.4,1058.6 L1653.1,1015.4 L1658.8,1049.5 L1663.3,1060.9 L1669.0,1033.6 L1674.7,1101.9 L1681.5,1045.0 L1686.1,1058.6 L1690.6,1004.0 L1696.3,1105.3 L1701.6,1056.4 L1706.6,1070.0 L1706.6,1142.3 Z" fill="#80b6fc"/>
<path d="M436.4,1019.9 L445.9,1035.9 L452.8,1051.8 L457.8,1034.7 L463.0,1070.0 L467.6,1067.8 L473.7,1031.3 L479.0,1063.2 L484.2,1004.0 L489.2,1051.8 L494.9,1038.1 L500.6,1072.3 L505.2,1072.3 L510.2,953.9 L516.5,1070.0 L521.1,1045.0 L526.8,1047.3 L532.5,1004.0 L537.5,999.4 L542.7,1013.1 L547.3,1019.9 L553.0,1026.8 L558.7,1064.3 L563.2,1056.4 L568.9,1088.3 L574.6,1042.7 L579.2,1066.6 L584.9,1022.2 L590.6,1004.0 L596.3,1006.3 L600.8,1058.6 L606.5,997.2 L612.2,1098.5 L616.8,1083.7 L622.5,1051.8 L627.0,1056.4 L632.7,1087.1 L638.4,1058.6 L644.1,1056.4 L649.8,981.2 L655.5,1045.0 L660.0,1049.5 L664.6,1049.5 L670.3,1047.3 L676.0,1029.0 L680.5,1013.1 L686.2,1017.7 L691.9,997.2 L696.5,1072.3 L702.2,1049.5 L707.9,1072.3 L712.4,1056.4 L718.1,1095.1 L723.8,1045.0 L728.4,1042.7 L734.1,1076.9 L739.8,1076.9 L745.4,1006.3 L750.0,1063.2 L755.0,1058.6 L760.2,1083.7 L765.9,1081.4 L771.0,1083.7 L776.9,1038.1 L781.9,1051.8 L787.6,999.4 L793.3,997.2 L797.8,1013.1 L803.5,1060.9 L809.2,1031.3 L813.8,1022.2 L818.3,1049.5 L824.0,969.8 L829.7,972.1 L835.4,1024.5 L840.0,981.2 L845.7,1054.1 L851.4,1058.6 L855.9,1024.5 L861.6,1040.4 L866.2,1063.2 L871.9,1006.3 L877.5,1022.2 L883.2,1038.1 L888.9,1008.5 L893.5,958.4 L899.2,1058.6 L904.9,1063.2 L910.6,1026.8 L917.4,1049.5 L920.8,1063.2 L926.5,1029.0 L931.1,1042.7 L936.8,1001.7 L941.3,999.4 L945.9,1056.4 L951.6,1049.5 L957.3,1074.6 L961.8,1038.1 L967.5,1101.9 L973.2,1038.1 L978.9,1088.3 L986.9,1074.6 L993.7,1074.6 L999.4,1120.1 L1009.6,1098.5 L1015.3,1106.5 L1021.0,1060.9 L1031.3,1116.7 L1037.0,1117.9 L1047.2,1129.3 L1057.5,1117.9 L1063.2,1129.3 L1070.0,1128.1 L1079.1,1116.7 L1084.8,1131.5 L1090.5,1125.8 L1095.1,1129.3 L1100.7,1130.4 L1106.4,1135.6 L1112.1,1134.3 L1116.7,1134.3 L1121.2,1137.5 L1128.1,1135.2 L1138.3,1138.4 L1142.9,1137.5 L1148.6,1140.6 L1154.3,1136.1 L1164.5,1140.6 L1169.1,1138.4 L1174.8,1140.6 L1180.5,1139.7 L1186.2,1141.8 L1191.9,1140.9 L1211.2,1141.8 L1222.6,1137.2 L1228.3,1089.4 L1232.8,1136.1 L1238.5,1058.6 L1244.2,1133.8 L1249.9,1128.1 L1254.5,1138.4 L1260.2,1132.7 L1265.9,1141.1 L1270.4,1137.2 L1279.5,1136.1 L1286.4,1120.1 L1292.1,1134.9 L1297.8,1130.4 L1302.3,1094.0 L1308.0,1131.5 L1313.2,1067.8 L1318.3,1117.9 L1324.0,1090.5 L1329.6,1096.2 L1334.2,1113.3 L1339.9,1117.9 L1345.6,1104.2 L1350.1,1099.6 L1361.5,1115.6 L1366.1,1109.9 L1371.8,1065.5 L1377.5,1122.4 L1383.2,1108.8 L1387.7,1106.5 L1390.0,1101.9 L1393.4,1109.2 L1398.7,1097.4 L1409.4,1100.8 L1413.9,1103.1 L1419.6,1111.0 L1425.3,1053.0 L1430.5,1092.8 L1435.6,1017.7 L1440.6,1078.0 L1445.8,1081.4 L1451.0,1019.9 L1458.3,1086.0 L1467.4,1021.1 L1473.1,1076.9 L1477.7,1097.4 L1483.4,1051.8 L1493.6,1101.9 L1498.2,1022.2 L1505.0,1063.2 L1515.3,1035.9 L1519.8,1019.9 L1525.5,1078.0 L1535.8,1026.8 L1547.2,1104.2 L1552.8,1089.4 L1558.5,1099.6 L1562.0,1010.8 L1568.8,994.9 L1583.6,1049.5 L1590.0,976.7 L1595.0,1049.5 L1599.5,1040.4 L1605.2,1031.3 L1610.9,1063.2 L1617.8,1063.2 L1622.3,1054.1 L1631.4,994.9 L1637.1,1072.3 L1642.8,1054.1 L1647.4,1054.1 L1653.1,1008.5 L1658.8,1045.0 L1663.3,1056.4 L1669.0,1031.3 L1674.7,1101.9 L1681.5,1042.7 L1686.1,1045.0 L1690.6,1001.7 L1696.3,1105.3 L1701.6,1054.1 L1706.6,1067.8" fill="none" stroke="rgba(43,74,154,0.55)" stroke-width="0.8" stroke-linejoin="round"/>
<path d="M436.4,1000.6 L445.9,1004.0 L452.8,1039.3 L457.8,1029.0 L463.0,1041.6 L467.6,1043.8 L473.7,1016.5 L479.0,1023.3 L484.2,981.2 L489.2,1046.1 L494.9,1019.9 L500.6,1063.2 L505.2,1057.5 L510.2,928.8 L516.5,1066.6 L521.1,1029.0 L526.8,1039.3 L532.5,983.5 L537.5,964.1 L542.7,983.5 L547.3,980.1 L553.0,1009.7 L558.7,1041.6 L563.2,1034.7 L568.9,1084.8 L574.6,1009.7 L579.2,1059.8 L584.9,1009.7 L590.6,976.7 L596.3,992.6 L600.8,1046.1 L606.5,976.7 L612.2,1094.0 L616.8,1070.0 L622.5,1017.7 L627.0,1022.2 L632.7,1082.6 L638.4,1038.1 L644.1,1040.4 L649.8,917.4 L655.5,960.7 L660.0,961.9 L664.6,988.0 L670.3,993.1 L676.0,976.7 L680.5,944.8 L686.2,899.2 L691.9,915.2 L696.5,988.0 L702.2,960.7 L707.9,981.2 L712.4,967.5 L718.1,1035.9 L723.8,960.7 L728.4,963.0 L734.1,1065.5 L739.8,957.3 L745.4,951.6 L750.0,951.6 L755.0,1010.8 L760.2,1006.3 L765.9,976.7 L771.0,1024.5 L776.9,997.2 L781.9,1004.0 L787.6,956.2 L793.3,949.3 L797.8,940.2 L803.5,976.7 L809.2,990.3 L813.8,972.1 L818.3,981.2 L824.0,901.5 L829.7,928.8 L835.4,999.4 L840.0,956.2 L845.7,1010.8 L851.4,1030.2 L855.9,981.2 L861.6,994.9 L866.2,1053.0 L871.9,978.9 L877.5,983.5 L883.2,1015.4 L888.9,996.0 L893.5,943.6 L899.2,1029.0 L904.9,1048.4 L910.6,999.4 L917.4,1027.9 L920.8,1053.0 L926.5,1013.1 L931.1,1015.4 L936.8,981.2 L941.3,985.8 L945.9,1031.3 L951.6,1030.2 L957.3,1068.9 L961.8,1029.0 L967.5,1100.8 L973.2,1026.8 L978.9,1078.0 L986.9,1058.6 L993.7,1063.2 L999.4,1112.2 L1009.6,1090.5 L1015.3,1100.8 L1021.0,1056.4 L1031.3,1105.3 L1037.0,1105.3 L1047.2,1123.6 L1057.5,1105.3 L1063.2,1125.8 L1070.0,1125.8 L1079.1,1114.4 L1084.8,1124.7 L1090.5,1122.4 L1095.1,1125.8 L1100.7,1113.3 L1106.4,1129.3 L1112.1,1129.3 L1116.7,1123.6 L1121.2,1135.4 L1128.1,1133.4 L1138.3,1136.5 L1142.9,1132.7 L1148.6,1139.7 L1154.3,1134.3 L1164.5,1139.7 L1169.1,1132.7 L1174.8,1138.8 L1180.5,1135.6 L1186.2,1140.9 L1191.9,1138.4 L1211.2,1140.9 L1222.6,1137.2 L1228.3,1089.4 L1232.8,1136.1 L1238.5,1058.6 L1244.2,1133.8 L1249.9,1128.1 L1254.5,1138.4 L1260.2,1132.7 L1265.9,1141.1 L1270.4,1137.2 L1279.5,1136.1 L1286.4,1120.1 L1292.1,1134.9 L1297.8,1130.4 L1302.3,1094.0 L1308.0,1131.5 L1313.2,1065.5 L1318.3,1117.9 L1324.0,1087.1 L1329.6,1091.7 L1334.2,1107.6 L1339.9,1112.2 L1345.6,1092.8 L1350.1,1088.3 L1361.5,1109.9 L1366.1,1094.0 L1371.8,1056.4 L1377.5,1117.9 L1383.2,1098.5 L1387.7,1051.8 L1390.0,1072.3 L1393.4,1107.6 L1398.7,1038.1 L1409.4,1057.5 L1413.9,1046.1 L1419.6,1068.9 L1425.3,1034.7 L1430.5,1055.2 L1435.6,940.2 L1440.6,1026.8 L1445.8,1030.2 L1451.0,985.8 L1458.3,1080.3 L1467.4,1016.5 L1473.1,1066.6 L1477.7,1068.9 L1483.4,1041.6 L1493.6,1100.1 L1498.2,1014.2 L1505.0,1058.6 L1515.3,992.6 L1519.8,1012.0 L1525.5,1073.5 L1535.8,1016.5 L1547.2,1102.4 L1552.8,1066.6 L1558.5,1091.7 L1562.0,1001.7 L1568.8,953.9 L1583.6,1037.0 L1590.0,944.8 L1595.0,990.3 L1599.5,1005.1 L1605.2,931.1 L1610.9,1024.5 L1617.8,1024.5 L1622.3,969.8 L1631.4,917.4 L1637.1,997.2 L1642.8,944.8 L1647.4,978.9 L1653.1,965.3 L1658.8,1022.2 L1663.3,1038.1 L1669.0,1015.4 L1674.7,1100.1 L1681.5,1006.3 L1686.1,994.9 L1690.6,992.6 L1696.3,1105.3 L1701.6,1041.6 L1706.6,1059.8" fill="none" stroke="#5a9cf5" stroke-width="0.8" stroke-linejoin="round"/>
<path d="M451.6,1142.3 L457.3,1134.9 L463.0,1142.3 Z" fill="#c9e46a"/>
<path d="M463.3,1142.3 L468.3,1128.1 L473.3,1142.3 Z" fill="#c9e46a"/>
<path d="M484.2,1142.3 L489.2,1136.1 L494.2,1142.3 Z" fill="#c9e46a"/>
<path d="M500.6,1142.3 L505.2,1137.2 L509.7,1142.3 Z" fill="#c9e46a"/>
<path d="M548.0,1142.3 L553.0,1136.1 L558.0,1142.3 Z" fill="#c9e46a"/>
<path d="M568.9,1142.3 L574.6,1122.4 L580.3,1142.3 Z" fill="#c9e46a"/>
<path d="M639.1,1142.3 L644.1,1136.1 L649.1,1142.3 Z" fill="#c9e46a"/>
<path d="M739.8,1142.3 L744.3,1137.2 L748.9,1142.3 Z" fill="#c9e46a"/>
<path d="M772.8,1142.3 L777.3,1137.2 L781.9,1142.3 Z" fill="#c9e46a"/>
<path d="M787.6,1142.3 L803.5,1127.0 L819.5,1142.3 Z" fill="#c9e46a"/>
<path d="M818.3,1142.3 L824.0,1104.2 L829.7,1142.3 Z" fill="#c9e46a"/>
<path d="M1020.6,1142.3 L1025.6,1134.9 L1030.6,1142.3 Z" fill="#c9e46a"/>
<path d="M1307.6,1142.3 L1313.2,1130.4 L1318.9,1142.3 Z" fill="#c9e46a"/>
<path d="M1323.5,1142.3 L1329.2,1120.1 L1334.9,1142.3 Z" fill="#c9e46a"/>
<path d="M1398.0,1142.3 L1403.7,1134.3 L1409.4,1142.3 Z" fill="#c9e46a"/>
<path d="M1584.7,1142.3 L1589.3,1137.2 L1593.8,1142.3 Z" fill="#c9e46a"/>
<path d="M1595.0,1142.3 L1599.5,1137.2 L1604.1,1142.3 Z" fill="#c9e46a"/>
<rect x="482.9" y="1143.3" width="1.5" height="14" fill="#ccd6eb"/>
<text class="ax" text-anchor="end" transform="translate(489.7,1168.3) rotate(-45)">16:00</text>
<rect x="589.2" y="1143.3" width="1.5" height="14" fill="#ccd6eb"/>
<text class="ax" text-anchor="end" transform="translate(596.0,1168.3) rotate(-45)">18:00</text>
<rect x="695.5" y="1143.3" width="1.5" height="14" fill="#ccd6eb"/>
<text class="ax" text-anchor="end" transform="translate(702.2,1168.3) rotate(-45)">20:00</text>
<rect x="801.7" y="1143.3" width="1.5" height="14" fill="#ccd6eb"/>
<text class="ax" text-anchor="end" transform="translate(808.5,1168.3) rotate(-45)">22:00</text>
<rect x="908.0" y="1143.3" width="1.5" height="14" fill="#ccd6eb"/>
<text class="ax" text-anchor="end" transform="translate(914.7,1168.3) rotate(-45)">14. Mar</text>
<rect x="1014.2" y="1143.3" width="1.5" height="14" fill="#ccd6eb"/>
<text class="ax" text-anchor="end" transform="translate(1021.0,1168.3) rotate(-45)">02:00</text>
<rect x="1120.5" y="1143.3" width="1.5" height="14" fill="#ccd6eb"/>
<text class="ax" text-anchor="end" transform="translate(1127.2,1168.3) rotate(-45)">04:00</text>
<rect x="1226.7" y="1143.3" width="1.5" height="14" fill="#ccd6eb"/>
<text class="ax" text-anchor="end" transform="translate(1233.5,1168.3) rotate(-45)">06:00</text>
<rect x="1333.0" y="1143.3" width="1.5" height="14" fill="#ccd6eb"/>
<text class="ax" text-anchor="end" transform="translate(1339.7,1168.3) rotate(-45)">08:00</text>
<rect x="1439.2" y="1143.3" width="1.5" height="14" fill="#ccd6eb"/>
<text class="ax" text-anchor="end" transform="translate(1446.0,1168.3) rotate(-45)">10:00</text>
<rect x="1545.5" y="1143.3" width="1.5" height="14" fill="#ccd6eb"/>
<text class="ax" text-anchor="end" transform="translate(1552.2,1168.3) rotate(-45)">12:00</text>
<rect x="1651.7" y="1143.3" width="1.5" height="14" fill="#ccd6eb"/>
<text class="ax" text-anchor="end" transform="translate(1658.5,1168.3) rotate(-45)">14:00</text>
<text class="ax" text-anchor="middle" transform="translate(340.0,1001.0) rotate(-90)">bps</text>
<circle cx="397.6" cy="1369.3" r="5.7" fill="#bdc3c7"/>
<text x="407.1" y="1374.8" class="lg">未知流量</text>
<circle cx="498.8" cy="1369.3" r="5.7" fill="#0066ff"/>
<text x="508.3" y="1374.8" class="lg">常用协议</text>
<circle cx="598.8" cy="1369.3" r="5.7" fill="#b0120a"/>
<text x="608.3" y="1374.8" class="lg">P2P下载</text>
<circle cx="696.4" cy="1369.3" r="5.7" fill="#fdd819"/>
<text x="705.9" y="1374.8" class="lg">网络电视</text>
<circle cx="796.8" cy="1369.3" r="5.7" fill="#ef3c3f"/>
<text x="806.3" y="1374.8" class="lg">社交</text>
<circle cx="866.7" cy="1369.3" r="5.7" fill="#6a35e0"/>
<text x="876.2" y="1374.8" class="lg">流媒体</text>
<circle cx="953.0" cy="1369.3" r="5.7" fill="#29b6f6"/>
<text x="962.5" y="1374.8" class="lg">网络电话</text>
<circle cx="1052.5" cy="1369.3" r="5.7" fill="#f4a225"/>
<text x="1062.0" y="1374.8" class="lg">网络游戏</text>
<circle cx="1153.0" cy="1369.3" r="5.7" fill="#a855e0"/>
<text x="1162.5" y="1374.8" class="lg">金融财经</text>
<circle cx="1254.0" cy="1369.3" r="5.7" fill="#0a3ba0"/>
<text x="1263.5" y="1374.8" class="lg">商业系统</text>
<circle cx="1354.3" cy="1369.3" r="5.7" fill="#a0fbfb"/>
<text x="1363.8" y="1374.8" class="lg">其它</text>
<circle cx="1424.8" cy="1369.3" r="5.7" fill="#569ffc"/>
<text x="1434.3" y="1374.8" class="lg">HTTP协议</text>
<circle cx="1533.0" cy="1369.3" r="5.7" fill="#b8dc3a"/>
<text x="1542.5" y="1374.8" class="lg">移动应用</text>
<circle cx="1633.6" cy="1369.3" r="5.7" fill="#fbe09d"/>
<text x="1643.1" y="1374.8" class="lg">自定义协议</text>
<rect x="409.7" y="1402" width="1308" height="2" fill="#dedede"/><text x="385" y="1408" class="ax" text-anchor="end">60k</text>
<path d="M2130.50,470.00 L2130.50,358.00 A112.0,112.0 0 1 1 2084.09,571.93 Z" fill="#569ffc" stroke="#fcfcfc" stroke-width="1" stroke-linejoin="round"/>
<path d="M2130.50,470.00 L2084.09,571.93 A112.0,112.0 0 0 1 2021.20,445.57 Z" fill="#fdd819" stroke="#fcfcfc" stroke-width="1" stroke-linejoin="round"/>
<path d="M2130.50,470.00 L2021.20,445.57 A112.0,112.0 0 0 1 2046.49,395.93 Z" fill="#ef3a3c" stroke="#fcfcfc" stroke-width="1" stroke-linejoin="round"/>
<path d="M2130.50,470.00 L2046.49,395.93 A112.0,112.0 0 0 1 2064.10,379.81 Z" fill="#a3fafa" stroke="#fcfcfc" stroke-width="1" stroke-linejoin="round"/>
<path d="M2130.50,470.00 L2064.10,379.81 A112.0,112.0 0 0 1 2082.81,368.66 Z" fill="#f3a626" stroke="#fcfcfc" stroke-width="1" stroke-linejoin="round"/>
<path d="M2130.50,470.00 L2082.81,368.66 A112.0,112.0 0 0 1 2099.93,362.25 Z" fill="#c3c7c8" stroke="#fcfcfc" stroke-width="1" stroke-linejoin="round"/>
<path d="M2130.50,470.00 L2099.93,362.25 A112.0,112.0 0 0 1 2112.28,359.49 Z" fill="#0066ff" stroke="#fcfcfc" stroke-width="1" stroke-linejoin="round"/>
<path d="M2130.50,470.00 L2112.28,359.49 A112.0,112.0 0 0 1 2120.66,358.43 Z" fill="#6a35e0" stroke="#fcfcfc" stroke-width="1" stroke-linejoin="round"/>
<path d="M2130.50,470.00 L2120.66,358.43 A112.0,112.0 0 0 1 2124.17,358.18 Z" fill="#0a3ba0" stroke="#fcfcfc" stroke-width="1" stroke-linejoin="round"/>
<path d="M2130.50,470.00 L2124.17,358.18 A112.0,112.0 0 0 1 2126.28,358.08 Z" fill="#29b6f6" stroke="#fcfcfc" stroke-width="1" stroke-linejoin="round"/>
<path d="M2130.50,470.00 L2126.28,358.08 A112.0,112.0 0 0 1 2129.09,358.01 Z" fill="#b0120a" stroke="#fcfcfc" stroke-width="1" stroke-linejoin="round"/>
<path d="M2130.50,470.00 L2129.09,358.01 A112.0,112.0 0 0 1 2130.50,358.00 Z" fill="#fbe09d" stroke="#fcfcfc" stroke-width="1" stroke-linejoin="round"/>
<path d="M2088,305 C2095,310 2100,330 2107,358" fill="none" stroke="#0066ff" stroke-width="1.5"/>
<text x="2070" y="315" class="pl" text-anchor="end">常用协议 1.8%</text>
<path d="M2020,343 C2060,345 2085,350 2092,364" fill="none" stroke="#c3c7c8" stroke-width="1.5"/>
<text x="1999" y="352" class="pl" text-anchor="end">未知流量 2.6%</text>
<path d="M1986,380 C2010,375 2035,365 2055,362 C2060,362 2062,368 2072,372" fill="none" stroke="#f3a626" stroke-width="1.5"/>
<text x="1967" y="389" class="pl" text-anchor="end">网络游戏 3.1%</text>
<path d="M1968,417 C2000,400 2030,380 2048,378 C2052,378 2054,382 2058,386" fill="none" stroke="#a3fafa" stroke-width="1.5"/>
<text x="1948" y="426" class="pl" text-anchor="end">其它 3.4%</text>
<path d="M1960,453 C1990,430 2010,412 2018,413 C2022,414 2025,417 2030,418" fill="none" stroke="#ef3a3c" stroke-width="1.5"/>
<text x="1940" y="461" class="pl" text-anchor="end">社交 8.0%</text>
<path d="M1976,542 C1995,537 2015,528 2030,520" fill="none" stroke="#fdd819" stroke-width="1.5"/>
<text x="1957" y="551" class="pl" text-anchor="end">网络电视 21.7%</text>
<path d="M2241,494 C2270,500 2290,504 2300,505" fill="none" stroke="#569ffc" stroke-width="1.5"/>
<text x="2317" y="514" class="pl" text-anchor="start">HTTP协议 56.8%</text>
<rect x="1904.7" y="858.5" width="476" height="2" fill="#dedede"/>
<text x="1879" y="867.5" class="ax" text-anchor="end">160M</text>
<text x="2405" y="867.5" class="ax">8k</text>
<rect x="1904.7" y="926.8" width="476" height="2" fill="#dedede"/>
<text x="1879" y="935.8" class="ax" text-anchor="end">120M</text>
<text x="2405" y="935.8" class="ax">6k</text>
<rect x="1904.7" y="992.5" width="476" height="2" fill="#dedede"/>
<text x="1879" y="1001.5" class="ax" text-anchor="end">80M</text>
<text x="2405" y="1001.5" class="ax">4k</text>
<rect x="1904.7" y="1058.3" width="476" height="2" fill="#dedede"/>
<text x="1879" y="1067.3" class="ax" text-anchor="end">40M</text>
<text x="2405" y="1067.3" class="ax">2k</text>
<rect x="1904.7" y="1124.7" width="476" height="2" fill="#dedede"/>
<text x="1879" y="1133.7" class="ax" text-anchor="end">0</text>
<text x="2405" y="1133.7" class="ax">0</text>
<text class="ax" text-anchor="middle" transform="translate(1823,993) rotate(-90)">bps</text>
<text class="ax" text-anchor="middle" transform="translate(2441,994) rotate(90)">Session #</text>
<rect x="1914.2" y="924.1" width="15" height="201.6" fill="#80b6fb"/>
<rect x="1914.2" y="914.7" width="15" height="8.3" fill="#ef3a3c"/>
<text class="ax" text-anchor="end" transform="translate(1927.7,1147.7) rotate(-45)">HTTP协议</text>
<rect x="1948.2" y="1124.9" width="15" height="0.8" fill="#80b6fb"/>
<rect x="1948.2" y="1043.2" width="15" height="80.7" fill="#ef3a3c"/>
<text class="ax" text-anchor="end" transform="translate(1961.7,1147.7) rotate(-45)">网络电视</text>
<rect x="1982.2" y="1108.2" width="15" height="17.5" fill="#80b6fb"/>
<rect x="1982.2" y="1100.9" width="15" height="6.3" fill="#ef3a3c"/>
<text class="ax" text-anchor="end" transform="translate(1995.7,1147.7) rotate(-45)">社交</text>
<rect x="2016.2" y="1111.6" width="15" height="14.1" fill="#80b6fb"/>
<rect x="2016.2" y="1107.6" width="15" height="3.0" fill="#ef3a3c"/>
<text class="ax" text-anchor="end" transform="translate(2029.7,1147.7) rotate(-45)">其它</text>
<rect x="2050.2" y="1117.0" width="15" height="8.7" fill="#80b6fb"/>
<rect x="2050.2" y="1112.2" width="15" height="3.8" fill="#ef3a3c"/>
<text class="ax" text-anchor="end" transform="translate(2063.7,1147.7) rotate(-45)">网络游戏</text>
<rect x="2084.2" y="1115.7" width="15" height="10.0" fill="#80b6fb"/>
<text class="ax" text-anchor="end" transform="translate(2097.7,1147.7) rotate(-45)">未知流量</text>
<rect x="2118.2" y="1117.9" width="15" height="7.8" fill="#80b6fb"/>
<text class="ax" text-anchor="end" transform="translate(2131.7,1147.7) rotate(-45)">常用协议</text>
<text class="ax" text-anchor="end" transform="translate(2165.7,1147.7) rotate(-45)">流媒体</text>
<text class="ax" text-anchor="end" transform="translate(2199.7,1147.7) rotate(-45)">商业系统</text>
<rect x="2220.2" y="1123.2" width="15" height="2.5" fill="#80b6fb"/>
<text class="ax" text-anchor="end" transform="translate(2233.7,1147.7) rotate(-45)">P2P下载</text>
<text class="ax" text-anchor="end" transform="translate(2267.7,1147.7) rotate(-45)">移动应用</text>
<text class="ax" text-anchor="end" transform="translate(2301.7,1147.7) rotate(-45)">网络电话</text>
<text class="ax" text-anchor="end" transform="translate(2335.7,1147.7) rotate(-45)">金融财经</text>
<text class="ax" text-anchor="end" transform="translate(2369.7,1147.7) rotate(-45)">自定义协议</text>
<path d="M1921.3,888.3 C1921.3,888.3 1941.4,1046.8 1954.8,1046.8 C1968.8,1046.8 1975.9,942.5 1989.9,942.5 C2003.4,942.5 2010.2,1117.9 2023.7,1117.9 C2037.2,1117.9 2044.0,1088.3 2057.5,1062.4 C2070.5,1037.5 2077.0,991.0 2090.0,991.0 C2103.6,991.0 2110.3,1002.4 2123.9,1028.6 C2138.1,1056.0 2145.1,1125.0 2159.3,1125.0 C2172.7,1125.0 2179.4,1121.1 2192.8,1116.3 C2206.6,1111.4 2213.4,1100.7 2227.2,1100.7 C2240.4,1100.7 2246.9,1117.0 2260.1,1121.0 C2273.9,1125.0 2280.8,1125.0 2294.6,1125.0 C2308.0,1125.0 2314.6,1125.0 2328.0,1125.0 C2341.6,1125.0 2361.9,1125.0 2361.9,1125.0" fill="none" stroke="#fdd819" stroke-width="3.5"/>
<circle cx="1921.3" cy="888.3" r="6.3" fill="#fdd819"/>
<circle cx="1954.8" cy="1046.8" r="6.3" fill="#fdd819"/>
<circle cx="1989.9" cy="942.5" r="6.3" fill="#fdd819"/>
<circle cx="2023.7" cy="1117.9" r="6.3" fill="#fdd819"/>
<circle cx="2057.5" cy="1062.4" r="6.3" fill="#fdd819"/>
<circle cx="2090.0" cy="991.0" r="6.3" fill="#fdd819"/>
<circle cx="2123.9" cy="1028.6" r="6.3" fill="#fdd819"/>
<circle cx="2159.3" cy="1125.0" r="6.3" fill="#fdd819"/>
<circle cx="2192.8" cy="1116.3" r="6.3" fill="#fdd819"/>
<circle cx="2227.2" cy="1100.7" r="6.3" fill="#fdd819"/>
<circle cx="2260.1" cy="1121.0" r="6.3" fill="#fdd819"/>
<circle cx="2294.6" cy="1125.0" r="6.3" fill="#fdd819"/>
<circle cx="2328.0" cy="1125.0" r="6.3" fill="#fdd819"/>
<circle cx="2361.9" cy="1125.0" r="6.3" fill="#fdd819"/>
<circle cx="2202.0" cy="825.7" r="5.7" fill="#ef3a3c"/>
<text x="2211.5" y="831.2" class="lg">上行速率</text>
<circle cx="2302.4" cy="825.7" r="5.7" fill="#80b5fb"/>
<text x="2311.9" y="831.2" class="lg">下行速率</text>
<circle cx="2402.6" cy="825.7" r="5.7" fill="#fdd819"/>
<text x="2412.1" y="831.2" class="lg">连接数</text>
<text x="2101" y="1402" class="pl" text-anchor="end">移动应用 0.5%</text><path d="M2121,1391 C2125,1395 2127,1400 2128,1405" fill="none" stroke="#b8dc3a" stroke-width="1.5"/>
<rect x="1715.0" y="199.0" width="22" height="2" fill="#555"/><rect x="1715.0" y="207.5" width="22" height="2" fill="#bbb"/><rect x="1715.0" y="216.0" width="22" height="2" fill="#555"/>
<rect x="2456.0" y="199.0" width="22" height="2" fill="#555"/><rect x="2456.0" y="207.5" width="22" height="2" fill="#bbb"/><rect x="2456.0" y="216.0" width="22" height="2" fill="#555"/>
<rect x="1715.0" y="742.0" width="22" height="2" fill="#555"/><rect x="1715.0" y="750.5" width="22" height="2" fill="#bbb"/><rect x="1715.0" y="759.0" width="22" height="2" fill="#555"/>
<rect x="2456.0" y="742.0" width="22" height="2" fill="#555"/><rect x="2456.0" y="750.5" width="22" height="2" fill="#bbb"/><rect x="2456.0" y="759.0" width="22" height="2" fill="#555"/>
<rect x="1715.0" y="1285.5" width="22" height="2" fill="#555"/><rect x="1715.0" y="1294.0" width="22" height="2" fill="#bbb"/><rect x="1715.0" y="1302.5" width="22" height="2" fill="#555"/>
<rect x="2456.0" y="1285.5" width="22" height="2" fill="#555"/><rect x="2456.0" y="1294.0" width="22" height="2" fill="#bbb"/><rect x="2456.0" y="1302.5" width="22" height="2" fill="#555"/>
</svg>
<div id="sb">
<div class="sb-item" style="top:0;height:71px"><svg class="ic" style="left:31px;top:21px" width="30" height="30" viewBox="-15 -15 30 30"><path d="M-11.5,8 A12,12 0 1 1 11.5,8" stroke="#fff" fill="none" stroke-width="1.8" stroke-linecap="round" stroke-linejoin="round"/><path d="M-12,10.5 H12" stroke="#fff" fill="none" stroke-width="1.8" stroke-linecap="round" stroke-linejoin="round" stroke-width="2.2"/><path d="M-1,6 L5,0" stroke="#fff" fill="none" stroke-width="1.8" stroke-linecap="round" stroke-linejoin="round" stroke-width="2.2"/><circle cx="-1.5" cy="6.5" r="1.6" fill="#fff"/></svg><span style="top:36px">系统概况</span><svg class="chev" style="top:32px" width="16" height="10" viewBox="0 0 16 10"><path d="M1.5,1.5 L8,8 L14.5,1.5" stroke="#fff" stroke-width="2.6" fill="none"/></svg></div>
<div style="position:absolute;left:0;top:71px;width:270px;height:56px;background:#2f89df"></div>
<div style="position:absolute;left:0;top:127px;width:270px;height:461px;background:#1a1a1a"></div>
<div class="dot" style="top:99px"></div><span class="st" style="top:102px">流量概况</span>
<div class="dot" style="top:156px"></div><span class="st" style="top:159px">系统信息</span>
<div class="dot" style="top:214px"></div><span class="st" style="top:217px">网卡设置</span>
<div class="dot" style="top:271px"></div><span class="st" style="top:274px">在线用户</span>
<div class="dot" style="top:329px"></div><span class="st" style="top:332px">Top应用</span>
<div class="dot" style="top:386px"></div><span class="st" style="top:389px">Top连接</span>
<div class="dot" style="top:443px"></div><span class="st" style="top:446px">虚拟链路</span>
<div class="dot" style="top:500px"></div><span class="st" style="top:503px">移动终端</span>
<div class="dot" style="top:558px"></div><span class="st" style="top:561px">应用商店</span>
<svg class="ic" style="left:31px;top:606px" width="30" height="30" viewBox="-15 -15 30 30"><ellipse cx="0" cy="-8" rx="9.5" ry="3.5" stroke="#fff" fill="none" stroke-width="1.8" stroke-linecap="round" stroke-linejoin="round"/><path d="M-9.5,-8 V9 A9.5,3.5 0 0 0 9.5,9 V-8" stroke="#fff" fill="none" stroke-width="1.8" stroke-linecap="round" stroke-linejoin="round"/><path d="M-9.5,-2.5 A9.5,3.5 0 0 0 9.5,-2.5 M-9.5,3 A9.5,3.5 0 0 0 9.5,3" stroke="#fff" fill="none" stroke-width="1.8" stroke-linecap="round" stroke-linejoin="round"/></svg><span class="st" style="top:621px">对象管理</span><svg class="chev" style="top:617px" width="16" height="10" viewBox="0 0 16 10"><path d="M1.5,1.5 L8,8 L14.5,1.5" stroke="#fff" stroke-width="2.6" fill="none"/></svg>
<svg class="ic" style="left:31px;top:675px" width="30" height="30" viewBox="-15 -15 30 30"><circle cx="0" cy="0" r="11.8" stroke="#fff" fill="none" stroke-width="1.8" stroke-linecap="round" stroke-linejoin="round" stroke-width="1.5"/><path d="M-0.8,-0.8 L-5,-5 M0.8,-0.8 L5,-5 M-0.8,0.8 L-5,5 M0.8,0.8 L5,5" stroke="#fff" fill="none" stroke-width="1.8" stroke-linecap="round" stroke-linejoin="round" stroke-width="1.6" stroke-linecap="butt"/><path d="M-7.5,-7.5 L-7.5,-2.6 L-2.6,-7.5 Z M7.5,-7.5 L7.5,-2.6 L2.6,-7.5 Z M-7.5,7.5 L-7.5,2.6 L-2.6,7.5 Z M7.5,7.5 L7.5,2.6 L2.6,7.5 Z" fill="#fff"/></svg><span class="st" style="top:690px">网络管理</span><svg class="chev" style="top:686px" width="16" height="10" viewBox="0 0 16 10"><path d="M1.5,1.5 L8,8 L14.5,1.5" stroke="#fff" stroke-width="2.6" fill="none"/></svg>
<svg class="ic" style="left:31px;top:744px" width="30" height="30" viewBox="-15 -15 30 30"><path d="M-10.5,11 V-1 A10.5,10.5 0 0 1 10.5,-1 V11" stroke="#fff" fill="none" stroke-width="1.8" stroke-linecap="round" stroke-linejoin="round" stroke-width="2"/><path d="M-2.5,7 V3 A2.5,2.5 0 0 1 2.5,3 V7" stroke="#fff" fill="none" stroke-width="1.8" stroke-linecap="round" stroke-linejoin="round" stroke-width="2"/></svg><span class="st" style="top:759px">虚拟专网</span><svg class="chev" style="top:755px" width="16" height="10" viewBox="0 0 16 10"><path d="M1.5,1.5 L8,8 L14.5,1.5" stroke="#fff" stroke-width="2.6" fill="none"/></svg>
<svg class="ic" style="left:31px;top:813px" width="30" height="30" viewBox="-15 -15 30 30"><path d="M-6.1,7 A9.8,9.8 0 1 1 7.7,-6.7" stroke="#fff" fill="none" stroke-width="1.8" stroke-linecap="round" stroke-linejoin="round" stroke-width="1.6"/><path d="M9.9,-0.3 A10,10 0 0 1 -0.3,10" stroke="#fff" fill="none" stroke-width="1.8" stroke-linecap="round" stroke-linejoin="round" stroke-width="1.6"/><path d="M-10.6,6.5 C-11.5,10 -10.5,11.5 -8,10.5 L8.5,-9.5 C10.5,-11.5 11.5,-10.5 10.9,-8" stroke="#fff" fill="none" stroke-width="1.8" stroke-linecap="round" stroke-linejoin="round" stroke-width="1.6"/><path d="M-2.2,-3.5 A2,2 0 1 1 0.9,-3.3" stroke="#fff" fill="none" stroke-width="1.8" stroke-linecap="round" stroke-linejoin="round" stroke-width="1.4"/></svg><span class="st" style="top:828px">行为管理</span><svg class="chev" style="top:824px" width="16" height="10" viewBox="0 0 16 10"><path d="M1.5,1.5 L8,8 L14.5,1.5" stroke="#fff" stroke-width="2.6" fill="none"/></svg>
<svg class="ic" style="left:31px;top:882px" width="30" height="30" viewBox="-15 -15 30 30"><path d="M-10.5,-3 A15,15 0 0 1 10.5,-3 M-6.8,1 A9.5,9.5 0 0 1 6.8,1 M-3.4,4.5 A5,5 0 0 1 3.4,4.5" stroke="#fff" fill="none" stroke-width="1.8" stroke-linecap="round" stroke-linejoin="round" stroke-width="2"/><circle cx="0" cy="8.5" r="1.8" fill="#fff"/></svg><span class="st" style="top:897px">无线AC</span><svg class="chev" style="top:893px" width="16" height="10" viewBox="0 0 16 10"><path d="M1.5,1.5 L8,8 L14.5,1.5" stroke="#fff" stroke-width="2.6" fill="none"/></svg>
<svg class="ic" style="left:31px;top:951px" width="30" height="30" viewBox="-15 -15 30 30"><circle cx="0" cy="-9" r="3" stroke="#fff" fill="none" stroke-width="1.8" stroke-linecap="round" stroke-linejoin="round"/><circle cx="-9" cy="8" r="3" stroke="#fff" fill="none" stroke-width="1.8" stroke-linecap="round" stroke-linejoin="round"/><circle cx="9" cy="8" r="3" stroke="#fff" fill="none" stroke-width="1.8" stroke-linecap="round" stroke-linejoin="round"/><path d="M-1.5,-6.5 L-7.5,5.5 M1.5,-6.5 L7.5,5.5 M-6,8 H6" stroke="#fff" fill="none" stroke-width="1.8" stroke-linecap="round" stroke-linejoin="round"/></svg><span class="st" style="top:966px">服务器负载</span><svg class="chev" style="top:962px" width="16" height="10" viewBox="0 0 16 10"><path d="M1.5,1.5 L8,8 L14.5,1.5" stroke="#fff" stroke-width="2.6" fill="none"/></svg>
<svg class="ic" style="left:31px;top:1020px" width="30" height="30" viewBox="-15 -15 30 30"><circle cx="-2.5" cy="-4.5" r="6.5" stroke="#fff" fill="none" stroke-width="1.8" stroke-linecap="round" stroke-linejoin="round"/><path d="M-13,11.5 C-13,4 -9,1 -6,0 M1,0 C4,1 8,4 8,11.5 H-13" stroke="#fff" fill="none" stroke-width="1.8" stroke-linecap="round" stroke-linejoin="round"/><path d="M3.5,-10.5 A6,6 0 0 1 5,1 C9,3 12,6 12,10" stroke="#fff" fill="none" stroke-width="1.8" stroke-linecap="round" stroke-linejoin="round"/></svg><span class="st" style="top:1035px">宽带准入</span><svg class="chev" style="top:1031px" width="16" height="10" viewBox="0 0 16 10"><path d="M1.5,1.5 L8,8 L14.5,1.5" stroke="#fff" stroke-width="2.6" fill="none"/></svg>
<svg class="ic" style="left:31px;top:1089px" width="30" height="30" viewBox="-15 -15 30 30"><rect x="-10" y="-10" width="7.5" height="7.5" stroke="#fff" fill="none" stroke-width="1.8" stroke-linecap="round" stroke-linejoin="round"/><rect x="-10" y="2.5" width="7.5" height="7.5" stroke="#fff" fill="none" stroke-width="1.8" stroke-linecap="round" stroke-linejoin="round"/><rect x="2.5" y="2.5" width="7.5" height="7.5" stroke="#fff" fill="none" stroke-width="1.8" stroke-linecap="round" stroke-linejoin="round"/><path d="M6.2,-13 L11.2,-8 L6.2,-3 L1.2,-8 Z" fill="#fff"/></svg><span class="st" style="top:1104px">应用识别</span><svg class="chev" style="top:1100px" width="16" height="10" viewBox="0 0 16 10"><path d="M1.5,1.5 L8,8 L14.5,1.5" stroke="#fff" stroke-width="2.6" fill="none"/></svg>
<svg class="ic" style="left:31px;top:1157px" width="30" height="30" viewBox="-15 -15 30 30"><path d="M-8,7 V-1 A8,8 0 0 1 8,-1 V7" stroke="#fff" fill="none" stroke-width="1.8" stroke-linecap="round" stroke-linejoin="round"/><path d="M-11,7.5 H11" stroke="#fff" fill="none" stroke-width="1.8" stroke-linecap="round" stroke-linejoin="round" stroke-width="2"/><path d="M-2.5,9.5 A2.5,2.5 0 0 0 2.5,9.5" stroke="#fff" fill="none" stroke-width="1.8" stroke-linecap="round" stroke-linejoin="round"/><path d="M0,-11 V-9" stroke="#fff" fill="none" stroke-width="1.8" stroke-linecap="round" stroke-linejoin="round"/></svg><span class="st" style="top:1172px">系统告警</span><svg class="chev" style="top:1168px" width="16" height="10" viewBox="0 0 16 10"><path d="M1.5,1.5 L8,8 L14.5,1.5" stroke="#fff" stroke-width="2.6" fill="none"/></svg>
<svg class="ic" style="left:31px;top:1226px" width="30" height="30" viewBox="-15 -15 30 30"><circle cx="0" cy="0" r="5" stroke="#fff" fill="none" stroke-width="1.8" stroke-linecap="round" stroke-linejoin="round"/><path d="M-2.2,-11.5 L2.2,-11.5 L3,-8 L6.2,-6.3 L9.6,-7.5 L11.8,-3.7 L9.2,-1.4 L9.2,1.4 L11.8,3.7 L9.6,7.5 L6.2,6.3 L3,8 L2.2,11.5 L-2.2,11.5 L-3,8 L-6.2,6.3 L-9.6,7.5 L-11.8,3.7 L-9.2,1.4 L-9.2,-1.4 L-11.8,-3.7 L-9.6,-7.5 L-6.2,-6.3 L-3,-8 Z" stroke="#fff" fill="none" stroke-width="1.8" stroke-linecap="round" stroke-linejoin="round"/></svg><span class="st" style="top:1241px">系统维护</span><svg class="chev" style="top:1237px" width="16" height="10" viewBox="0 0 16 10"><path d="M1.5,1.5 L8,8 L14.5,1.5" stroke="#fff" stroke-width="2.6" fill="none"/></svg>
<div style="position:absolute;left:0;top:1350px;width:270px;height:55px;background:#1d2b41"></div>
<svg class="ic" style="left:33px;top:1362px" width="26" height="24" viewBox="0 0 26 24"><rect x="1" y="2" width="23" height="3" fill="#fff"/><rect x="9" y="10" width="15" height="3" fill="#fff"/><rect x="1" y="18" width="23" height="3" fill="#fff"/><path d="M1,11.5 L6,8 V15 Z" fill="#fff"/></svg>
</div>
</body></html>
